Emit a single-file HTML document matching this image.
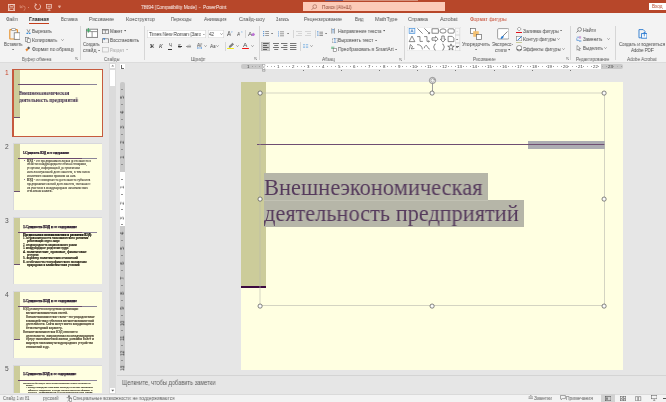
<!DOCTYPE html>
<html><head><meta charset="utf-8"><style>
html,body{margin:0;padding:0;}
body{width:666px;height:402px;overflow:hidden;position:relative;background:#e6e6e6;font-family:"Liberation Sans",sans-serif;}
.a{position:absolute;}
.t{white-space:nowrap;transform-origin:0 50%;will-change:transform;}
</style></head><body>
<div class="a" style="left:0px;top:0px;width:666px;height:12.6px;background:#b7472a;"></div>
<div class="a" style="left:325px;top:0px;width:18px;height:1.2px;background:#6a5a80;"></div>
<div class="a" style="left:343px;top:0px;width:75px;height:1.1px;background:#d3917c;"></div>
<svg class="a" style="left:7.8px;top:3.8px;" width="7.2" height="7.2" viewBox="0 0 7.2 7.2"><rect x="0.5" y="0.5" width="6.2" height="6.2" fill="none" stroke="#f6d8cf" stroke-width="0.8"/><rect x="2" y="0.6" width="3.2" height="2" fill="none" stroke="#f6d8cf" stroke-width="0.6"/><rect x="1.8" y="4" width="3.6" height="2.6" fill="none" stroke="#f6d8cf" stroke-width="0.6"/></svg>
<svg class="a" style="left:18.8px;top:3.6px;" width="7.5" height="7.5" viewBox="0 0 7.5 7.5"><path d="M1.2 1.2 L1.2 3.6 L3.6 3.6 M1.4 3.4 Q3.6 0.8 5.8 2.6 Q7 4.2 5 6.8" fill="none" stroke="#d98a72" stroke-width="0.8"/></svg>
<div class="a" style="left:28.4px;top:6.6px;width:1.0px;height:0.6px;background:#d98a72;"></div>
<svg class="a" style="left:34.0px;top:3.4px;" width="7.4" height="7.4" viewBox="0 0 7.4 7.4"><path d="M5.6 1.4 Q6.8 2.6 6.6 4.2 Q6.2 6.6 3.6 6.6 Q1 6.4 0.8 3.8 Q0.9 2.2 2.2 1.2 M0.8 0.8 L2.4 1.4 L1.6 2.8" fill="none" stroke="#f6d8cf" stroke-width="0.8"/></svg>
<svg class="a" style="left:45.7px;top:3.6px;" width="6.2" height="7.2" viewBox="0 0 6.2 7.2"><rect x="0.6" y="0.6" width="5" height="3.6" fill="none" stroke="#f6d8cf" stroke-width="0.7"/><path d="M3.1 4.2 V6.4 M1.6 6.6 H4.6 M2.2 1.6 V3.2 M3.1 2.2 V3.2 M4 1.4 V3.2" stroke="#f6d8cf" stroke-width="0.6"/></svg>
<svg class="a" style="left:58.2px;top:5.0px;" width="3" height="3.2" viewBox="0 0 3 3.2"><path d="M0.3 0.4 H2.7 M0.3 1.6 L1.5 2.8 L2.7 1.6 Z" fill="#f6d8cf" stroke="#f6d8cf" stroke-width="0.4"/></svg>
<div class="a" style="left:302.7px;top:1.8px;width:142.7px;height:9.3px;background:#fccbb8;"></div>
<span class="a t" style="left:322.3px;top:6.00px;font-size:4.8px;line-height:4.8px;color:#8a4636;font-weight:normal;font-family:'Liberation Sans', sans-serif;transform:scaleX(0.9698);">Поиск (Alt+Ш)</span>
<svg class="a" style="left:310.5px;top:3.6px;" width="6.2" height="6.4" viewBox="0 0 6.2 6.4"><circle cx="3.8" cy="2.6" r="1.9" fill="none" stroke="#9a5a48" stroke-width="0.6"/><path d="M2.4 4 L0.6 5.8" stroke="#9a5a48" stroke-width="0.7"/></svg>
<span class="a t" style="left:140.5px;top:5.00px;font-size:5.0px;line-height:5.0px;color:#ffffff;font-weight:normal;font-family:'Liberation Sans', sans-serif;transform:scaleX(0.9155);">78694 [Compatibility Mode]&nbsp; -&nbsp; PowerPoint</span>
<div class="a" style="left:648.8px;top:3px;width:17.2px;height:6.9px;background:#ffffff;"></div>
<span class="a t" style="left:651.5px;top:5.00px;font-size:4.6px;line-height:4.6px;color:#b7472a;font-weight:normal;font-family:'Liberation Sans', sans-serif;transform:scaleX(1.0090);">Вход</span>
<div class="a" style="left:0px;top:12.6px;width:666px;height:49.6px;background:#f3f3f3;"></div>
<div class="a" style="left:0px;top:62px;width:666px;height:0.6px;background:#dcdcdc;"></div>
<span class="a t" style="left:6px;top:17.00px;font-size:5.6px;line-height:5.6px;color:#505050;font-weight:normal;font-family:'Liberation Sans', sans-serif;transform:scaleX(0.8354);">Файл</span>
<span class="a t" style="left:28.7px;top:17.00px;font-size:5.6px;line-height:5.6px;color:#262626;font-weight:bold;font-family:'Liberation Sans', sans-serif;transform:scaleX(0.8791);">Главная</span>
<span class="a t" style="left:60.5px;top:17.00px;font-size:5.6px;line-height:5.6px;color:#505050;font-weight:normal;font-family:'Liberation Sans', sans-serif;transform:scaleX(0.7934);">Вставка</span>
<span class="a t" style="left:89px;top:17.00px;font-size:5.6px;line-height:5.6px;color:#505050;font-weight:normal;font-family:'Liberation Sans', sans-serif;transform:scaleX(0.8874);">Рисование</span>
<span class="a t" style="left:126px;top:17.00px;font-size:5.6px;line-height:5.6px;color:#505050;font-weight:normal;font-family:'Liberation Sans', sans-serif;transform:scaleX(0.9089);">Конструктор</span>
<span class="a t" style="left:170.5px;top:17.00px;font-size:5.6px;line-height:5.6px;color:#505050;font-weight:normal;font-family:'Liberation Sans', sans-serif;transform:scaleX(0.7810);">Переходы</span>
<span class="a t" style="left:204px;top:17.00px;font-size:5.6px;line-height:5.6px;color:#505050;font-weight:normal;font-family:'Liberation Sans', sans-serif;transform:scaleX(0.8566);">Анимация</span>
<span class="a t" style="left:239px;top:17.00px;font-size:5.6px;line-height:5.6px;color:#505050;font-weight:normal;font-family:'Liberation Sans', sans-serif;transform:scaleX(0.8862);">Слайд-шоу</span>
<span class="a t" style="left:276px;top:17.00px;font-size:5.6px;line-height:5.6px;color:#505050;font-weight:normal;font-family:'Liberation Sans', sans-serif;transform:scaleX(0.7081);">Запись</span>
<span class="a t" style="left:304px;top:17.00px;font-size:5.6px;line-height:5.6px;color:#505050;font-weight:normal;font-family:'Liberation Sans', sans-serif;transform:scaleX(0.8796);">Рецензирование</span>
<span class="a t" style="left:354.5px;top:17.00px;font-size:5.6px;line-height:5.6px;color:#505050;font-weight:normal;font-family:'Liberation Sans', sans-serif;transform:scaleX(0.8395);">Вид</span>
<span class="a t" style="left:374.5px;top:17.00px;font-size:5.6px;line-height:5.6px;color:#505050;font-weight:normal;font-family:'Liberation Sans', sans-serif;transform:scaleX(0.9160);">MathType</span>
<span class="a t" style="left:408px;top:17.00px;font-size:5.6px;line-height:5.6px;color:#505050;font-weight:normal;font-family:'Liberation Sans', sans-serif;transform:scaleX(0.9110);">Справка</span>
<span class="a t" style="left:439.5px;top:17.00px;font-size:5.6px;line-height:5.6px;color:#505050;font-weight:normal;font-family:'Liberation Sans', sans-serif;transform:scaleX(0.9076);">Acrobat</span>
<span class="a t" style="left:469.5px;top:17.00px;font-size:5.6px;line-height:5.6px;color:#c4432a;font-weight:normal;font-family:'Liberation Sans', sans-serif;transform:scaleX(0.8889);">Формат фигуры</span>
<div class="a" style="left:28.7px;top:23px;width:20px;height:1.1px;background:#c43e1c;"></div>
<svg class="a" style="left:8.6px;top:28.2px;" width="11.5" height="11.8" viewBox="0 0 11.5 11.8"><rect x="0.8" y="1.6" width="7.6" height="9.4" rx="0.6" fill="none" stroke="#e8912a" stroke-width="1.1"/><rect x="2.6" y="0.5" width="4" height="2" rx="0.4" fill="#fff" stroke="#777" stroke-width="0.6"/><rect x="5.2" y="4.8" width="5.8" height="6.5" fill="#fff" stroke="#6a6a6a" stroke-width="0.7"/></svg>
<span class="a t" style="left:3.8px;top:42.00px;font-size:5.2px;line-height:5.2px;color:#474747;font-weight:normal;font-family:'Liberation Sans', sans-serif;transform:scaleX(0.8364);">Вставить</span>
<svg class="a" style="left:11.9px;top:48.8px;" width="2.2" height="1.4" viewBox="0 0 2.2 1.4"><path d="M0 0 L2.2 0 L1.1 1.4 Z" fill="#666"/></svg>
<svg class="a" style="left:25.8px;top:28.6px;" width="5" height="5.4" viewBox="0 0 5 5.4"><path d="M1 0.3 L2.5 3.3 M4 0.3 L2.5 3.3" stroke="#555" stroke-width="0.6" fill="none"/><circle cx="1.3" cy="4.3" r="0.9" fill="#3c8fd8"/><circle cx="3.7" cy="4.3" r="0.9" fill="#3c8fd8"/></svg>
<span class="a t" style="left:31.8px;top:29.00px;font-size:5.2px;line-height:5.2px;color:#474747;font-weight:normal;font-family:'Liberation Sans', sans-serif;transform:scaleX(0.8580);">Вырезать</span>
<svg class="a" style="left:25.4px;top:37.4px;" width="5.8" height="6" viewBox="0 0 5.8 6"><rect x="0.4" y="0.6" width="3" height="3.8" fill="none" stroke="#666" stroke-width="0.55"/><rect x="2.2" y="1.8" width="3" height="3.8" fill="#fff" stroke="#555" stroke-width="0.55"/></svg>
<span class="a t" style="left:31.8px;top:38.00px;font-size:5.2px;line-height:5.2px;color:#474747;font-weight:normal;font-family:'Liberation Sans', sans-serif;transform:scaleX(0.9020);">Копировать</span>
<svg class="a" style="left:60.9px;top:39.0px;" width="3.0" height="2.0" viewBox="0 0 3.0 2.0"><path d="M0.4 0.4 L1.5 1.6 L2.6 0.4" fill="none" stroke="#666" stroke-width="0.6"/></svg>
<svg class="a" style="left:25.4px;top:46.2px;" width="5.6" height="5.8" viewBox="0 0 5.6 5.8"><path d="M3.6 0.4 L5.2 2 L3.4 3.4 L2 2 Z" fill="#555"/><path d="M0.4 3.6 L2 2.2 L3.4 3.6 L1.8 5.4 Z" fill="#e8822a"/></svg>
<span class="a t" style="left:31.8px;top:47.00px;font-size:5.2px;line-height:5.2px;color:#474747;font-weight:normal;font-family:'Liberation Sans', sans-serif;transform:scaleX(0.9029);">Формат по образцу</span>
<span class="a t" style="left:21.6px;top:58.00px;font-size:4.9px;line-height:4.9px;color:#5a5a5a;font-weight:normal;font-family:'Liberation Sans', sans-serif;transform:scaleX(0.8846);">Буфер обмена</span>
<svg class="a" style="left:74.7px;top:57.3px;" width="3" height="3" viewBox="0 0 3 3"><path d="M0.3 0.3 H2.6 M0.3 0.3 V2.6 M1.1 1.1 L2.7 2.7 M2.7 1.6 V2.7 H1.6" fill="none" stroke="#777" stroke-width="0.5"/></svg>
<div class="a" style="left:79.7px;top:26px;width:0.6px;height:34px;background:#d6d6d6;"></div>
<svg class="a" style="left:86px;top:28.4px;" width="12.2" height="10" viewBox="0 0 12.2 10"><rect x="0.6" y="1.2" width="11" height="8.2" fill="#fff" stroke="#7a7a7a" stroke-width="0.9"/><path d="M1.2 3.6 H11 M6.1 3.6 V9" stroke="#7a7a7a" stroke-width="0.8"/><path d="M2.4 0 V4.6 M0.1 2.3 H4.7" stroke="#3aa860" stroke-width="0.9"/></svg>
<span class="a t" style="left:83.4px;top:42.00px;font-size:5.2px;line-height:5.2px;color:#474747;font-weight:normal;font-family:'Liberation Sans', sans-serif;transform:scaleX(0.8418);">Создать</span>
<span class="a t" style="left:83.4px;top:48.00px;font-size:5.2px;line-height:5.2px;color:#474747;font-weight:normal;font-family:'Liberation Sans', sans-serif;transform:scaleX(0.9074);">слайд</span>
<svg class="a" style="left:97.5px;top:49.5px;" width="2.2" height="1.4" viewBox="0 0 2.2 1.4"><path d="M0 0 L2.2 0 L1.1 1.4 Z" fill="#666"/></svg>
<svg class="a" style="left:102.2px;top:28.6px;" width="7" height="5.4" viewBox="0 0 7 5.4"><rect x="0.4" y="0.4" width="6" height="4.4" fill="none" stroke="#6a6a6a" stroke-width="0.7"/><path d="M3.4 1.2 V4.2 M1.2 1.2 H5.6" stroke="#6a6a6a" stroke-width="0.6"/></svg>
<span class="a t" style="left:110px;top:29.00px;font-size:5.2px;line-height:5.2px;color:#474747;font-weight:normal;font-family:'Liberation Sans', sans-serif;transform:scaleX(0.8511);">Макет</span>
<svg class="a" style="left:123.9px;top:30.3px;" width="2.2" height="1.4" viewBox="0 0 2.2 1.4"><path d="M0 0 L2.2 0 L1.1 1.4 Z" fill="#666"/></svg>
<svg class="a" style="left:102.2px;top:37.8px;" width="7" height="5.6" viewBox="0 0 7 5.6"><rect x="0.4" y="0.8" width="6" height="4.4" fill="none" stroke="#6a6a6a" stroke-width="0.7"/><path d="M1 0.2 L2.2 2.2 L3.4 0.2" fill="#2a7ad0"/></svg>
<span class="a t" style="left:110px;top:38.00px;font-size:5.2px;line-height:5.2px;color:#474747;font-weight:normal;font-family:'Liberation Sans', sans-serif;transform:scaleX(0.8730);">Восстановить</span>
<svg class="a" style="left:102.2px;top:47.2px;" width="7" height="5.4" viewBox="0 0 7 5.4"><rect x="0.4" y="0.4" width="6" height="4.6" fill="none" stroke="#bdbdbd" stroke-width="0.7"/></svg>
<span class="a t" style="left:110px;top:48.00px;font-size:5.2px;line-height:5.2px;color:#a8a8a8;font-weight:normal;font-family:'Liberation Sans', sans-serif;transform:scaleX(0.8160);">Раздел</span>
<svg class="a" style="left:125.9px;top:49.099999999999994px;" width="2.2" height="1.4" viewBox="0 0 2.2 1.4"><path d="M0 0 L2.2 0 L1.1 1.4 Z" fill="#b0b0b0"/></svg>
<span class="a t" style="left:104px;top:58.00px;font-size:4.9px;line-height:4.9px;color:#5a5a5a;font-weight:normal;font-family:'Liberation Sans', sans-serif;transform:scaleX(0.8563);">Слайды</span>
<div class="a" style="left:144.4px;top:26px;width:0.6px;height:34px;background:#d6d6d6;"></div>
<div class="a" style="left:147.4px;top:29.7px;width:58.8px;height:8.5px;background:#ffffff;box-shadow:inset 0 0 0 0.6px #d4d4d4"></div>
<span class="a t" style="left:149px;top:32.00px;font-size:5.2px;line-height:5.2px;color:#333;font-weight:normal;font-family:'Liberation Sans', sans-serif;transform:scaleX(0.9037);">Times New Roman (Заго</span>
<svg class="a" style="left:202.9px;top:33.650000000000006px;" width="1.8" height="1.1" viewBox="0 0 1.8 1.1"><path d="M0 0 L1.8 0 L0.9 1.1 Z" fill="#777"/></svg>
<div class="a" style="left:207.6px;top:29.7px;width:16.9px;height:8.5px;background:#ffffff;box-shadow:inset 0 0 0 0.6px #d4d4d4"></div>
<span class="a t" style="left:209.2px;top:32.00px;font-size:5.2px;line-height:5.2px;color:#333;font-weight:normal;font-family:'Liberation Sans', sans-serif;transform:scaleX(0.8303);">42</span>
<svg class="a" style="left:219.5px;top:33.0px;" width="3.0" height="2.0" viewBox="0 0 3.0 2.0"><path d="M0.4 0.4 L1.5 1.6 L2.6 0.4" fill="none" stroke="#666" stroke-width="0.6"/></svg>
<span class="a t" style="left:227.2px;top:31.00px;font-size:6.4px;line-height:6.4px;color:#444;font-weight:normal;font-family:'Liberation Sans', sans-serif;transform:scaleX(0.8908);">A</span>
<svg class="a" style="left:231.0px;top:30.6px;" width="2.2" height="2" viewBox="0 0 2.2 2"><path d="M0.2 1.4 L1.1 0.5 L2.0 1.4" fill="none" stroke="#3a8ad8" stroke-width="0.5"/></svg>
<span class="a t" style="left:236.8px;top:32.00px;font-size:5.6px;line-height:5.6px;color:#444;font-weight:normal;font-family:'Liberation Sans', sans-serif;transform:scaleX(0.8569);">A</span>
<svg class="a" style="left:240.6px;top:30.6px;" width="2.2" height="2" viewBox="0 0 2.2 2"><path d="M0.2 0.5 L1.1 1.4 L2.0 0.5" fill="none" stroke="#3a8ad8" stroke-width="0.5"/></svg>
<div class="a" style="left:245.4px;top:29.5px;width:0.6px;height:8.0px;background:#d6d6d6;"></div>
<span class="a t" style="left:248.2px;top:31.00px;font-size:6.2px;line-height:6.2px;color:#555;font-weight:normal;font-family:'Liberation Sans', sans-serif;transform:scaleX(1.0385);">A</span>
<svg class="a" style="left:250.8px;top:32.0px;" width="4.4" height="4.4" viewBox="0 0 4.4 4.4"><path d="M0.5 2.8 L2.3 1.0 L3.9 2.4 L2.2 4.2 Z" fill="#c070d8" stroke="#a050c0" stroke-width="0.4"/></svg>
<span class="a t" style="left:149.8px;top:43.00px;font-size:6.0px;line-height:6.0px;color:#2a2a2a;font-weight:bold;font-family:'Liberation Sans', sans-serif;transform:scaleX(0.6989);">Ж</span>
<span class="a t" style="left:159.4px;top:43.00px;font-size:6.0px;line-height:6.0px;color:#3a3a3a;font-weight:normal;font-family:'Liberation Sans', sans-serif;transform:scaleX(0.9022);font-style:italic">К</span>
<span class="a t" style="left:168.6px;top:42.00px;font-size:6.0px;line-height:6.0px;color:#3a3a3a;font-weight:normal;font-family:'Liberation Sans', sans-serif;transform:scaleX(0.8000);">Ч</span>
<div class="a" style="left:168.4px;top:48.5px;width:3.4px;height:0.5px;background:#3a3a3a;"></div>
<span class="a t" style="left:178.2px;top:43.00px;font-size:6.0px;line-height:6.0px;color:#3a3a3a;font-weight:normal;font-family:'Liberation Sans', sans-serif;transform:scaleX(0.7471);">S</span>
<div class="a" style="left:177.8px;top:45.7px;width:3.8px;height:0.45px;background:#3a3a3a;"></div>
<span class="a t" style="left:186.6px;top:45.00px;font-size:4.6px;line-height:4.6px;color:#9a9a9a;font-weight:normal;font-family:'Liberation Sans', sans-serif;transform:scaleX(0.8195);">ab</span>
<div class="a" style="left:186.4px;top:45.8px;width:4.6px;height:0.45px;background:#9a9a9a;"></div>
<span class="a t" style="left:197.4px;top:44.00px;font-size:4.6px;line-height:4.6px;color:#3a3a3a;font-weight:normal;font-family:'Liberation Sans', sans-serif;transform:scaleX(0.8625);">AV</span>
<svg class="a" style="left:197.4px;top:47.4px;" width="5.4" height="2" viewBox="0 0 5.4 2"><path d="M0.3 1 H5 M0.3 1 L1.1 0.3 M0.3 1 L1.1 1.7 M5 1 L4.2 0.3 M5 1 L4.2 1.7" fill="none" stroke="#2a7ad0" stroke-width="0.5"/></svg>
<svg class="a" style="left:203.7px;top:45.0px;" width="3.0" height="2.0" viewBox="0 0 3.0 2.0"><path d="M0.4 0.4 L1.5 1.6 L2.6 0.4" fill="none" stroke="#666" stroke-width="0.6"/></svg>
<span class="a t" style="left:209.6px;top:44.00px;font-size:5.2px;line-height:5.2px;color:#444;font-weight:normal;font-family:'Liberation Sans', sans-serif;transform:scaleX(0.8806);">Aa</span>
<svg class="a" style="left:215.9px;top:45.0px;" width="3.0" height="2.0" viewBox="0 0 3.0 2.0"><path d="M0.4 0.4 L1.5 1.6 L2.6 0.4" fill="none" stroke="#666" stroke-width="0.6"/></svg>
<div class="a" style="left:224.6px;top:42.0px;width:0.6px;height:8.5px;background:#d6d6d6;"></div>
<svg class="a" style="left:227.6px;top:41.6px;" width="6.4" height="6" viewBox="0 0 6.4 6"><path d="M1.4 4.2 L4.4 1.2 L5.6 2.2 L2.6 5.2 Z" fill="#888" stroke="#444" stroke-width="0.5"/><path d="M1.4 4.2 L0.8 5.6 L2.6 5.2" fill="#444"/></svg>
<div class="a" style="left:227.2px;top:48.1px;width:6.6px;height:1.2px;background:#f2ea10;border-radius:0.5px"></div>
<svg class="a" style="left:235.5px;top:45.0px;" width="3.0" height="2.0" viewBox="0 0 3.0 2.0"><path d="M0.4 0.4 L1.5 1.6 L2.6 0.4" fill="none" stroke="#666" stroke-width="0.6"/></svg>
<span class="a t" style="left:243.0px;top:43.00px;font-size:5.2px;line-height:5.2px;color:#505050;font-weight:normal;font-family:'Liberation Sans', sans-serif;transform:scaleX(1.2685);">A</span>
<div class="a" style="left:242.2px;top:48.1px;width:6.6px;height:1.2px;background:#f01010;border-radius:0.5px"></div>
<svg class="a" style="left:250.5px;top:45.0px;" width="3.0" height="2.0" viewBox="0 0 3.0 2.0"><path d="M0.4 0.4 L1.5 1.6 L2.6 0.4" fill="none" stroke="#666" stroke-width="0.6"/></svg>
<span class="a t" style="left:191px;top:58.00px;font-size:4.9px;line-height:4.9px;color:#5a5a5a;font-weight:normal;font-family:'Liberation Sans', sans-serif;transform:scaleX(0.9010);">Шрифт</span>
<svg class="a" style="left:253.9px;top:57.3px;" width="3" height="3" viewBox="0 0 3 3"><path d="M0.3 0.3 H2.6 M0.3 0.3 V2.6 M1.1 1.1 L2.7 2.7 M2.7 1.6 V2.7 H1.6" fill="none" stroke="#777" stroke-width="0.5"/></svg>
<div class="a" style="left:258.7px;top:26px;width:0.6px;height:34px;background:#d6d6d6;"></div>
<svg class="a" style="left:262.6px;top:30.6px;" width="6.6" height="6.5" viewBox="0 0 6.6 6.5"><circle cx="0.7" cy="0.6" r="0.55" fill="#2a7ad0"/><rect x="2.2" y="0.25" width="4.3999999999999995" height="0.55" fill="#555"/><circle cx="0.7" cy="2.6" r="0.55" fill="#2a7ad0"/><rect x="2.2" y="2.25" width="4.3999999999999995" height="0.55" fill="#555"/><circle cx="0.7" cy="4.6" r="0.55" fill="#2a7ad0"/><rect x="2.2" y="4.25" width="4.3999999999999995" height="0.55" fill="#555"/></svg>
<svg class="a" style="left:271.2px;top:33.099999999999994px;" width="2.2" height="1.4" viewBox="0 0 2.2 1.4"><path d="M0 0 L2.2 0 L1.1 1.4 Z" fill="#666"/></svg>
<svg class="a" style="left:277.6px;top:30.6px;" width="6.6" height="6" viewBox="0 0 6.6 6"><rect x="0.3" y="0.3" width="0.6" height="1.2" fill="#2a7ad0"/><rect x="0.3" y="2.3" width="0.6" height="1.2" fill="#2a7ad0"/><rect x="0.3" y="4.3" width="0.6" height="1.2" fill="#2a7ad0"/><rect x="2" y="0.6" width="4.4" height="0.55" fill="#555"/><rect x="2" y="2.6" width="4.4" height="0.55" fill="#555"/><rect x="2" y="4.6" width="4.4" height="0.55" fill="#555"/></svg>
<svg class="a" style="left:286.5px;top:33.099999999999994px;" width="2.2" height="1.4" viewBox="0 0 2.2 1.4"><path d="M0 0 L2.2 0 L1.1 1.4 Z" fill="#666"/></svg>
<div class="a" style="left:292.6px;top:29.5px;width:0.6px;height:8.0px;background:#d6d6d6;"></div>
<svg class="a" style="left:296px;top:30.8px;" width="6" height="6.5" viewBox="0 0 6 6.5"><rect x="0" y="0.25" width="6" height="0.55" fill="#bdbdbd"/><rect x="2" y="2.25" width="4" height="0.55" fill="#bdbdbd"/><rect x="0" y="4.25" width="6" height="0.55" fill="#bdbdbd"/></svg>
<svg class="a" style="left:305px;top:30.8px;" width="6" height="6.5" viewBox="0 0 6 6.5"><rect x="0" y="0.25" width="6" height="0.55" fill="#bdbdbd"/><rect x="2" y="2.25" width="4" height="0.55" fill="#bdbdbd"/><rect x="0" y="4.25" width="6" height="0.55" fill="#bdbdbd"/></svg>
<div class="a" style="left:314.6px;top:29.5px;width:0.6px;height:8.0px;background:#d6d6d6;"></div>
<svg class="a" style="left:316.6px;top:30.8px;" width="6.6" height="5.6" viewBox="0 0 6.6 5.6"><path d="M0.8 0.3 V5.2 M0.2 1 L0.8 0.3 L1.4 1 M0.2 4.5 L0.8 5.2 L1.4 4.5" fill="none" stroke="#2a7ad0" stroke-width="0.45"/><rect x="2.4" y="0.8" width="4" height="0.6" fill="#555"/><rect x="2.4" y="2.6" width="4" height="0.6" fill="#555"/><rect x="2.4" y="4.4" width="4" height="0.6" fill="#555"/></svg>
<svg class="a" style="left:324.7px;top:33.099999999999994px;" width="2.2" height="1.4" viewBox="0 0 2.2 1.4"><path d="M0 0 L2.2 0 L1.1 1.4 Z" fill="#666"/></svg>
<div class="a" style="left:261.4px;top:41.7px;width:8.6px;height:8.9px;background:#d0d0d0;box-shadow:inset 0 0 0 0.5px #b4b4b4"></div>
<svg class="a" style="left:262.8px;top:43px;" width="6.6" height="7" viewBox="0 0 6.6 7"><rect x="0" y="0" width="5.8" height="0.8" fill="#444"/><rect x="0" y="2" width="4.0" height="0.8" fill="#444"/><rect x="0" y="4" width="5.8" height="0.8" fill="#444"/><rect x="0" y="6" width="4.0" height="0.8" fill="#444"/></svg>
<svg class="a" style="left:272.8px;top:43px;" width="6.6" height="7" viewBox="0 0 6.6 7"><rect x="0" y="0" width="6.4" height="0.8" fill="#555"/><rect x="1.2" y="2" width="4.0" height="0.8" fill="#555"/><rect x="0" y="4" width="6.4" height="0.8" fill="#555"/><rect x="1.2" y="6" width="4.0" height="0.8" fill="#555"/></svg>
<svg class="a" style="left:281.0px;top:43px;" width="6.6" height="7" viewBox="0 0 6.6 7"><rect x="0" y="0" width="6.4" height="0.8" fill="#555"/><rect x="2.4" y="2" width="4.0" height="0.8" fill="#555"/><rect x="0" y="4" width="6.4" height="0.8" fill="#555"/><rect x="2.4" y="6" width="4.0" height="0.8" fill="#555"/></svg>
<svg class="a" style="left:290.2px;top:43px;" width="6.6" height="7" viewBox="0 0 6.6 7"><rect x="0" y="0" width="6.4" height="0.8" fill="#555"/><rect x="0" y="2" width="6.4" height="0.8" fill="#555"/><rect x="0" y="4" width="6.4" height="0.8" fill="#555"/><rect x="0" y="6" width="6.4" height="0.8" fill="#555"/></svg>
<div class="a" style="left:299.6px;top:42.0px;width:0.6px;height:8.5px;background:#d6d6d6;"></div>
<svg class="a" style="left:303.4px;top:44.2px;" width="5.4" height="4.2" viewBox="0 0 5.4 4.2"><rect x="0" y="0.3" width="2.2" height="0.6" fill="#6aa8e0"/><rect x="3" y="0.3" width="2.2" height="0.6" fill="#6aa8e0"/><rect x="0" y="1.8" width="2.2" height="0.6" fill="#6aa8e0"/><rect x="3" y="1.8" width="2.2" height="0.6" fill="#6aa8e0"/><rect x="0" y="3.3" width="2.2" height="0.6" fill="#6aa8e0"/><rect x="3" y="3.3" width="2.2" height="0.6" fill="#6aa8e0"/></svg>
<svg class="a" style="left:310.1px;top:45.0px;" width="3.0" height="2.0" viewBox="0 0 3.0 2.0"><path d="M0.4 0.4 L1.5 1.6 L2.6 0.4" fill="none" stroke="#666" stroke-width="0.6"/></svg>
<svg class="a" style="left:331.4px;top:27.8px;" width="4.4" height="6" viewBox="0 0 4.4 6"><path d="M0.7 0.3 V5.6 M3.5 0.3 V5.6" stroke="#555" stroke-width="0.5"/><path d="M2.1 5.4 V1 M1.4 1.8 L2.1 1 L2.8 1.8" fill="none" stroke="#2a7ad0" stroke-width="0.5"/></svg>
<span class="a t" style="left:338px;top:29.00px;font-size:5.2px;line-height:5.2px;color:#474747;font-weight:normal;font-family:'Liberation Sans', sans-serif;transform:scaleX(0.8823);">Направление текста</span>
<svg class="a" style="left:382.9px;top:30.3px;" width="2.2" height="1.4" viewBox="0 0 2.2 1.4"><path d="M0 0 L2.2 0 L1.1 1.4 Z" fill="#666"/></svg>
<svg class="a" style="left:331.6px;top:37.6px;" width="6" height="5.6" viewBox="0 0 6 5.6"><rect x="0.4" y="0.4" width="5" height="4.6" fill="none" stroke="#555" stroke-width="0.5" stroke-dasharray="1 0.6"/><path d="M2.9 0.2 V5.2 M2.2 1 L2.9 0.3 L3.6 1 M2.2 4.4 L2.9 5.1 L3.6 4.4" fill="none" stroke="#2a7ad0" stroke-width="0.5"/></svg>
<span class="a t" style="left:338px;top:38.00px;font-size:5.2px;line-height:5.2px;color:#474747;font-weight:normal;font-family:'Liberation Sans', sans-serif;transform:scaleX(0.8708);">Выровнять текст</span>
<svg class="a" style="left:374.9px;top:39.699999999999996px;" width="2.2" height="1.4" viewBox="0 0 2.2 1.4"><path d="M0 0 L2.2 0 L1.1 1.4 Z" fill="#666"/></svg>
<svg class="a" style="left:331.0px;top:46.4px;" width="6.2" height="6" viewBox="0 0 6.2 6"><rect x="2.2" y="2.4" width="3.4" height="3" fill="#fff" stroke="#555" stroke-width="0.5"/><path d="M0.2 1.2 H3.4 M0.2 2.4 H2" stroke="#3aa860" stroke-width="0.7"/></svg>
<span class="a t" style="left:338px;top:47.00px;font-size:5.2px;line-height:5.2px;color:#474747;font-weight:normal;font-family:'Liberation Sans', sans-serif;transform:scaleX(0.8820);">Преобразовать в SmartArt</span>
<svg class="a" style="left:394.9px;top:48.9px;" width="2.2" height="1.4" viewBox="0 0 2.2 1.4"><path d="M0 0 L2.2 0 L1.1 1.4 Z" fill="#666"/></svg>
<span class="a t" style="left:321.5px;top:58.00px;font-size:4.9px;line-height:4.9px;color:#5a5a5a;font-weight:normal;font-family:'Liberation Sans', sans-serif;transform:scaleX(0.8956);">Абзац</span>
<svg class="a" style="left:398.8px;top:57.7px;" width="3" height="3" viewBox="0 0 3 3"><path d="M0.3 0.3 H2.6 M0.3 0.3 V2.6 M1.1 1.1 L2.7 2.7 M2.7 1.6 V2.7 H1.6" fill="none" stroke="#777" stroke-width="0.5"/></svg>
<div class="a" style="left:403.6px;top:26px;width:0.6px;height:34px;background:#d6d6d6;"></div>
<div class="a" style="left:407.4px;top:27.4px;width:53.2px;height:23.2px;background:#ffffff;box-shadow:inset 0 0 0 0.5px #dedede"></div>
<svg class="a" style="left:408.8px;top:28.4px;overflow:visible" width="6.6" height="6.6" viewBox="0 0 6.6 6.6"><g transform="translate(-0.6 -0.6) scale(1.2)"><rect x="0.6" y="0.9" width="4.8" height="4.2" fill="#eef4fb" stroke="#3a8ad8" stroke-width="0.55"/><path d="M2 4.2 L3 1.8 L4 4.2 M2.4 3.4 H3.6" fill="none" stroke="#2a6ab0" stroke-width="0.45"/></g></svg>
<svg class="a" style="left:416.5px;top:28.4px;overflow:visible" width="6.6" height="6.6" viewBox="0 0 6.6 6.6"><g transform="translate(-0.6 -0.6) scale(1.2)"><path d="M0.8 0.8 L5.2 5.2" stroke="#3a3a3a" stroke-width="0.5"/></g></svg>
<svg class="a" style="left:424.4px;top:28.4px;overflow:visible" width="6.6" height="6.6" viewBox="0 0 6.6 6.6"><g transform="translate(-0.6 -0.6) scale(1.2)"><path d="M0.8 0.8 L5 5 M5.2 3.8 V5.2 H3.8" fill="none" stroke="#3a3a3a" stroke-width="0.5"/></g></svg>
<svg class="a" style="left:431.8px;top:28.4px;overflow:visible" width="6.6" height="6.6" viewBox="0 0 6.6 6.6"><g transform="translate(-0.6 -0.6) scale(1.2)"><rect x="0.5" y="1.2" width="5.2" height="3.6" fill="none" stroke="#3a3a3a" stroke-width="0.5"/></g></svg>
<svg class="a" style="left:439.6px;top:28.4px;overflow:visible" width="6.6" height="6.6" viewBox="0 0 6.6 6.6"><g transform="translate(-0.6 -0.6) scale(1.2)"><ellipse cx="3" cy="3" rx="2.6" ry="1.8" fill="none" stroke="#3a3a3a" stroke-width="0.5"/></g></svg>
<svg class="a" style="left:447.8px;top:28.4px;overflow:visible" width="6.6" height="6.6" viewBox="0 0 6.6 6.6"><g transform="translate(-0.6 -0.6) scale(1.2)"><rect x="0.5" y="1.2" width="5.2" height="3.6" rx="1" fill="none" stroke="#3a3a3a" stroke-width="0.5"/></g></svg>
<svg class="a" style="left:408.8px;top:36.0px;overflow:visible" width="6.6" height="6.6" viewBox="0 0 6.6 6.6"><g transform="translate(-0.6 -0.6) scale(1.2)"><path d="M3 0.6 L5.4 5.2 H0.6 Z" fill="none" stroke="#3a3a3a" stroke-width="0.5"/></g></svg>
<svg class="a" style="left:416.5px;top:36.0px;overflow:visible" width="6.6" height="6.6" viewBox="0 0 6.6 6.6"><g transform="translate(-0.6 -0.6) scale(1.2)"><path d="M0.6 1 H3 V5 H5.4" fill="none" stroke="#3a3a3a" stroke-width="0.5"/></g></svg>
<svg class="a" style="left:424.4px;top:36.0px;overflow:visible" width="6.6" height="6.6" viewBox="0 0 6.6 6.6"><g transform="translate(-0.6 -0.6) scale(1.2)"><path d="M0.6 1 H3 V5 H5 M4.2 4.3 L5 5 L4.2 5.7" fill="none" stroke="#3a3a3a" stroke-width="0.5"/></g></svg>
<svg class="a" style="left:431.8px;top:36.0px;overflow:visible" width="6.6" height="6.6" viewBox="0 0 6.6 6.6"><g transform="translate(-0.6 -0.6) scale(1.2)"><path d="M0.5 2 H3.4 V0.8 L5.6 3 L3.4 5.2 V4 H0.5 Z" fill="none" stroke="#3a3a3a" stroke-width="0.5"/></g></svg>
<svg class="a" style="left:439.6px;top:36.0px;overflow:visible" width="6.6" height="6.6" viewBox="0 0 6.6 6.6"><g transform="translate(-0.6 -0.6) scale(1.2)"><path d="M2 0.5 H4 V3.2 H5.2 L3 5.6 L0.8 3.2 H2 Z" fill="none" stroke="#3a3a3a" stroke-width="0.5"/></g></svg>
<svg class="a" style="left:447.8px;top:36.0px;overflow:visible" width="6.6" height="6.6" viewBox="0 0 6.6 6.6"><g transform="translate(-0.6 -0.6) scale(1.2)"><path d="M0.6 0.8 H4 L5.4 2.2 V5.2 H0.6 Z" fill="none" stroke="#3a3a3a" stroke-width="0.5"/></g></svg>
<svg class="a" style="left:408.8px;top:43.6px;overflow:visible" width="6.6" height="6.6" viewBox="0 0 6.6 6.6"><g transform="translate(-0.6 -0.6) scale(1.2)"><path d="M0.8 5 L1.6 1 L3.4 2.6 L2.4 4.6 L5 4.2" fill="none" stroke="#3a3a3a" stroke-width="0.5"/></g></svg>
<svg class="a" style="left:416.5px;top:43.6px;overflow:visible" width="6.6" height="6.6" viewBox="0 0 6.6 6.6"><g transform="translate(-0.6 -0.6) scale(1.2)"><path d="M0.6 1 Q4.6 1 5 5" fill="none" stroke="#3a3a3a" stroke-width="0.5"/></g></svg>
<svg class="a" style="left:424.4px;top:43.6px;overflow:visible" width="6.6" height="6.6" viewBox="0 0 6.6 6.6"><g transform="translate(-0.6 -0.6) scale(1.2)"><path d="M0.6 4 Q2 0.2 3.2 2.6 T5.4 4.8" fill="none" stroke="#3a3a3a" stroke-width="0.5"/></g></svg>
<svg class="a" style="left:431.8px;top:43.6px;overflow:visible" width="6.6" height="6.6" viewBox="0 0 6.6 6.6"><g transform="translate(-0.6 -0.6) scale(1.2)"><path d="M3.6 0.5 Q2.4 0.5 2.4 1.8 V2.4 L1.6 3 L2.4 3.6 V4.4 Q2.4 5.6 3.6 5.6" fill="none" stroke="#3a3a3a" stroke-width="0.5"/></g></svg>
<svg class="a" style="left:439.6px;top:43.6px;overflow:visible" width="6.6" height="6.6" viewBox="0 0 6.6 6.6"><g transform="translate(-0.6 -0.6) scale(1.2)"><path d="M2.4 0.5 Q3.6 0.5 3.6 1.8 V2.4 L4.4 3 L3.6 3.6 V4.4 Q3.6 5.6 2.4 5.6" fill="none" stroke="#3a3a3a" stroke-width="0.5"/></g></svg>
<svg class="a" style="left:447.8px;top:43.6px;overflow:visible" width="6.6" height="6.6" viewBox="0 0 6.6 6.6"><g transform="translate(-0.6 -0.6) scale(1.2)"><path d="M3 0.4 L3.7 2.3 L5.7 2.3 L4.1 3.5 L4.7 5.5 L3 4.3 L1.3 5.5 L1.9 3.5 L0.3 2.3 L2.3 2.3 Z" fill="none" stroke="#3a3a3a" stroke-width="0.5"/></g></svg>
<div class="a" style="left:454.8px;top:27.8px;width:5.4px;height:7.4px;background:#f8f8f8;box-shadow:inset 0 0 0 0.5px #d4d4d4"></div>
<div class="a" style="left:454.8px;top:35.4px;width:5.4px;height:7.4px;background:#f8f8f8;box-shadow:inset 0 0 0 0.5px #d4d4d4"></div>
<div class="a" style="left:454.8px;top:43.2px;width:5.4px;height:7.4px;background:#f8f8f8;box-shadow:inset 0 0 0 0.5px #d4d4d4"></div>
<svg class="a" style="left:456.3px;top:30.7px;" width="2.6" height="1.6" viewBox="0 0 2.6 1.6"><path d="M0.3 1.3 L1.3 0.3 L2.3 1.3" fill="none" stroke="#c0c0c0" stroke-width="0.5"/></svg>
<svg class="a" style="left:456.4px;top:38.5px;" width="2.2" height="1.4" viewBox="0 0 2.2 1.4"><path d="M0 0 L2.2 0 L1.1 1.4 Z" fill="#707070"/></svg>
<div class="a" style="left:456.4px;top:45.6px;width:2.2px;height:0.45px;background:#707070;"></div>
<svg class="a" style="left:456.4px;top:46.5px;" width="2.2" height="1.4" viewBox="0 0 2.2 1.4"><path d="M0 0 L2.2 0 L1.1 1.4 Z" fill="#707070"/></svg>
<svg class="a" style="left:470.2px;top:27.8px;" width="12" height="12" viewBox="0 0 12 12"><rect x="0.5" y="0.5" width="5" height="5" fill="#fff" stroke="#666" stroke-width="0.7"/><rect x="3.2" y="3.2" width="5.6" height="5.6" fill="#f4c070"/><rect x="6.5" y="6.5" width="5" height="5" fill="#fff" stroke="#666" stroke-width="0.7"/></svg>
<span class="a t" style="left:462.2px;top:42.00px;font-size:5.2px;line-height:5.2px;color:#474747;font-weight:normal;font-family:'Liberation Sans', sans-serif;transform:scaleX(0.9004);">Упорядочить</span>
<svg class="a" style="left:474.9px;top:48.8px;" width="2.2" height="1.4" viewBox="0 0 2.2 1.4"><path d="M0 0 L2.2 0 L1.1 1.4 Z" fill="#666"/></svg>
<svg class="a" style="left:496.6px;top:28.2px;" width="12.6" height="12" viewBox="0 0 12.6 12"><rect x="0.6" y="0.6" width="11.4" height="10.4" rx="1.2" fill="#fff" stroke="#8a8a8a" stroke-width="0.8"/><path d="M10.5 3.5 L6 8" stroke="#666" stroke-width="0.8"/><path d="M4 10.6 Q4.2 8.2 6.2 8.2 Q6.8 9.8 4 10.6 Z" fill="#2a7ad0" stroke="#2a7ad0" stroke-width="0.8"/></svg>
<span class="a t" style="left:491.8px;top:42.00px;font-size:5.2px;line-height:5.2px;color:#474747;font-weight:normal;font-family:'Liberation Sans', sans-serif;transform:scaleX(0.8693);">Экспресс-</span>
<span class="a t" style="left:494.8px;top:48.00px;font-size:5.2px;line-height:5.2px;color:#474747;font-weight:normal;font-family:'Liberation Sans', sans-serif;transform:scaleX(0.8843);">стили</span>
<svg class="a" style="left:508.29999999999995px;top:49.3px;" width="2.2" height="1.4" viewBox="0 0 2.2 1.4"><path d="M0 0 L2.2 0 L1.1 1.4 Z" fill="#666"/></svg>
<svg class="a" style="left:516px;top:26.4px;" width="6.4" height="5.6" viewBox="0 0 6.4 5.6"><path d="M1.2 3 L3.2 1 L5.2 3 L3.2 5 Z" fill="#fff" stroke="#555" stroke-width="0.5"/></svg>
<div class="a" style="left:515.8px;top:32.0px;width:6.6px;height:1.0px;background:#e0101a;"></div>
<span class="a t" style="left:523.2px;top:29.00px;font-size:5.2px;line-height:5.2px;color:#474747;font-weight:normal;font-family:'Liberation Sans', sans-serif;transform:scaleX(0.9085);">Заливка фигуры</span>
<svg class="a" style="left:559.9px;top:30.1px;" width="2.2" height="1.4" viewBox="0 0 2.2 1.4"><path d="M0 0 L2.2 0 L1.1 1.4 Z" fill="#666"/></svg>
<svg class="a" style="left:516px;top:36px;" width="6.4" height="5.4" viewBox="0 0 6.4 5.4"><rect x="0.5" y="0.5" width="5.4" height="4.4" fill="#fff" stroke="#666" stroke-width="0.5"/><path d="M1.6 4.2 L5.6 0.6" stroke="#2a7ad0" stroke-width="1"/></svg>
<div class="a" style="left:515.8px;top:41.8px;width:6.6px;height:0.9px;background:#c9c99a;"></div>
<span class="a t" style="left:523.2px;top:37.00px;font-size:5.2px;line-height:5.2px;color:#474747;font-weight:normal;font-family:'Liberation Sans', sans-serif;transform:scaleX(0.9096);">Контур фигуры</span>
<svg class="a" style="left:557.1px;top:38.4px;" width="3.0" height="2.0" viewBox="0 0 3.0 2.0"><path d="M0.4 0.4 L1.5 1.6 L2.6 0.4" fill="none" stroke="#666" stroke-width="0.6"/></svg>
<svg class="a" style="left:516px;top:45.4px;" width="6.4" height="6.4" viewBox="0 0 6.4 6.4"><circle cx="3.2" cy="3.2" r="2.7" fill="#fff" stroke="#555" stroke-width="0.6"/><path d="M0.8 3.6 Q3.2 5.8 5.6 3.6 V4.4 Q3.2 6.2 0.8 4.4 Z" fill="#555"/></svg>
<span class="a t" style="left:523.2px;top:47.00px;font-size:5.2px;line-height:5.2px;color:#474747;font-weight:normal;font-family:'Liberation Sans', sans-serif;transform:scaleX(0.8743);">Эффекты фигуры</span>
<svg class="a" style="left:561.5px;top:47.6px;" width="3.0" height="2.0" viewBox="0 0 3.0 2.0"><path d="M0.4 0.4 L1.5 1.6 L2.6 0.4" fill="none" stroke="#666" stroke-width="0.6"/></svg>
<span class="a t" style="left:472.6px;top:58.00px;font-size:4.9px;line-height:4.9px;color:#5a5a5a;font-weight:normal;font-family:'Liberation Sans', sans-serif;transform:scaleX(0.9010);">Рисование</span>
<svg class="a" style="left:566.1px;top:57.3px;" width="3" height="3" viewBox="0 0 3 3"><path d="M0.3 0.3 H2.6 M0.3 0.3 V2.6 M1.1 1.1 L2.7 2.7 M2.7 1.6 V2.7 H1.6" fill="none" stroke="#777" stroke-width="0.5"/></svg>
<div class="a" style="left:570px;top:26px;width:0.6px;height:34px;background:#d6d6d6;"></div>
<svg class="a" style="left:575.5px;top:27.2px;" width="6" height="6" viewBox="0 0 6 6"><circle cx="3.6" cy="2.4" r="1.9" fill="none" stroke="#555" stroke-width="0.6"/><path d="M2.2 3.8 L0.5 5.5" stroke="#555" stroke-width="0.7"/></svg>
<span class="a t" style="left:583px;top:28.00px;font-size:5.2px;line-height:5.2px;color:#474747;font-weight:normal;font-family:'Liberation Sans', sans-serif;transform:scaleX(0.8776);">Найти</span>
<svg class="a" style="left:575.5px;top:36.2px;" width="6" height="6.2" viewBox="0 0 6 6.2"><path d="M0.8 1.2 H3.2 M0.8 2.2 V4.4 H3" fill="none" stroke="#2a7ad0" stroke-width="0.6"/><path d="M3.4 0.2 V2.6 M4.6 0.2 V2.6" stroke="#b060c0" stroke-width="0.6"/><path d="M3.6 4 V6 M4.8 4 V6" stroke="#2a7ad0" stroke-width="0.5"/></svg>
<span class="a t" style="left:583px;top:37.00px;font-size:5.2px;line-height:5.2px;color:#474747;font-weight:normal;font-family:'Liberation Sans', sans-serif;transform:scaleX(0.8322);">Заменить</span>
<svg class="a" style="left:606.7px;top:38.1px;" width="3.0" height="2.0" viewBox="0 0 3.0 2.0"><path d="M0.4 0.4 L1.5 1.6 L2.6 0.4" fill="none" stroke="#666" stroke-width="0.6"/></svg>
<svg class="a" style="left:576px;top:44.8px;" width="5.4" height="6.4" viewBox="0 0 5.4 6.4"><path d="M1 0.5 L1 5.2 L2.2 4 L3.2 6 L4 5.6 L3 3.6 L4.6 3.6 Z" fill="#fff" stroke="#555" stroke-width="0.5"/></svg>
<span class="a t" style="left:583px;top:46.00px;font-size:5.2px;line-height:5.2px;color:#474747;font-weight:normal;font-family:'Liberation Sans', sans-serif;transform:scaleX(0.8355);">Выделить</span>
<svg class="a" style="left:604.3px;top:46.8px;" width="3.0" height="2.0" viewBox="0 0 3.0 2.0"><path d="M0.4 0.4 L1.5 1.6 L2.6 0.4" fill="none" stroke="#666" stroke-width="0.6"/></svg>
<span class="a t" style="left:575.8px;top:58.00px;font-size:4.9px;line-height:4.9px;color:#5a5a5a;font-weight:normal;font-family:'Liberation Sans', sans-serif;transform:scaleX(0.8963);">Редактирование</span>
<div class="a" style="left:614.7px;top:26px;width:0.6px;height:34px;background:#d6d6d6;"></div>
<svg class="a" style="left:637.7px;top:28.8px;" width="9.6" height="10" viewBox="0 0 9.6 10"><path d="M1 0.6 H5.2 L7 2.4 V6 M1 0.6 V8.8 H3" fill="none" stroke="#2a7ad0" stroke-width="0.9"/><rect x="3.6" y="4.6" width="5.4" height="4.6" fill="#fff" stroke="#2a7ad0" stroke-width="0.9"/><path d="M6.3 7.4 V3.4 M5.2 4.4 L6.3 3.3 L7.4 4.4" fill="none" stroke="#2a7ad0" stroke-width="0.8"/></svg>
<span class="a t" style="left:619px;top:42.00px;font-size:5.2px;line-height:5.2px;color:#474747;font-weight:normal;font-family:'Liberation Sans', sans-serif;transform:scaleX(0.8644);">Создать и поделиться</span>
<span class="a t" style="left:630.5px;top:48.00px;font-size:5.2px;line-height:5.2px;color:#474747;font-weight:normal;font-family:'Liberation Sans', sans-serif;transform:scaleX(0.8349);">Adobe PDF</span>
<span class="a t" style="left:627px;top:58.00px;font-size:4.9px;line-height:4.9px;color:#5a5a5a;font-weight:normal;font-family:'Liberation Sans', sans-serif;transform:scaleX(0.9192);">Adobe Acrobat</span>
<div class="a" style="left:108.8px;top:62.6px;width:7.2px;height:331.6px;background:#dbdbdb;"></div>
<div class="a" style="left:240.5px;top:81.7px;width:382.8px;height:288.2px;background:#ffffe1;"></div>
<div class="a" style="left:240.5px;top:81.7px;width:25.6px;height:204.3px;background:#cccc9a;"></div>
<div class="a" style="left:240.5px;top:285.8px;width:25.6px;height:2.2px;background:#3d0a40;"></div>
<div class="a" style="left:528px;top:141.2px;width:76.5px;height:7.6px;background:#acacb2;"></div>
<div class="a" style="left:257px;top:144.1px;width:347.5px;height:1.3px;background:#6e4e72;"></div>
<div class="a" style="left:263.5px;top:172.8px;width:224.4px;height:26.9px;background:#b6b6a8;"></div>
<div class="a" style="left:263.5px;top:199.7px;width:260.4px;height:27.1px;background:#b6b6a8;"></div>
<div class="a" style="left:263.5px;top:199.5px;width:224.4px;height:0.6px;background:#c2c2b4;"></div>
<span class="a t" style="left:264.3px;top:176.75px;font-size:22.5px;line-height:22.5px;color:#553a5c;font-weight:normal;font-family:'Liberation Serif', serif;transform:scaleX(0.9976);">Внешнеэкономическая</span>
<span class="a t" style="left:264.3px;top:203.35px;font-size:22.5px;line-height:22.5px;color:#553a5c;font-weight:normal;font-family:'Liberation Serif', serif;transform:scaleX(0.9923);">деятельность предприятий</span>
<svg class="a" style="left:259px;top:92.4px;" width="347" height="215" viewBox="0 0 347 215"><rect x="1" y="1" width="344.5" height="212.4" fill="none" stroke="#b8b8ae" stroke-width="0.6"/></svg>
<div class="a" style="left:431.75px;top:83px;width:0.5px;height:10.5px;background:#a0a0a0;"></div>
<svg class="a" style="left:256.9px;top:90.4px;" width="6.2" height="6.2" viewBox="0 0 6.2 6.2"><circle cx="3.1" cy="3.1" r="2.1" fill="#fafafa" stroke="#505050" stroke-width="0.7"/></svg>
<svg class="a" style="left:256.9px;top:196.4px;" width="6.2" height="6.2" viewBox="0 0 6.2 6.2"><circle cx="3.1" cy="3.1" r="2.1" fill="#fafafa" stroke="#505050" stroke-width="0.7"/></svg>
<svg class="a" style="left:256.9px;top:302.7px;" width="6.2" height="6.2" viewBox="0 0 6.2 6.2"><circle cx="3.1" cy="3.1" r="2.1" fill="#fafafa" stroke="#505050" stroke-width="0.7"/></svg>
<svg class="a" style="left:428.9px;top:90.4px;" width="6.2" height="6.2" viewBox="0 0 6.2 6.2"><circle cx="3.1" cy="3.1" r="2.1" fill="#fafafa" stroke="#505050" stroke-width="0.7"/></svg>
<svg class="a" style="left:428.9px;top:302.7px;" width="6.2" height="6.2" viewBox="0 0 6.2 6.2"><circle cx="3.1" cy="3.1" r="2.1" fill="#fafafa" stroke="#505050" stroke-width="0.7"/></svg>
<svg class="a" style="left:601.4px;top:90.4px;" width="6.2" height="6.2" viewBox="0 0 6.2 6.2"><circle cx="3.1" cy="3.1" r="2.1" fill="#fafafa" stroke="#505050" stroke-width="0.7"/></svg>
<svg class="a" style="left:601.4px;top:196.4px;" width="6.2" height="6.2" viewBox="0 0 6.2 6.2"><circle cx="3.1" cy="3.1" r="2.1" fill="#fafafa" stroke="#505050" stroke-width="0.7"/></svg>
<svg class="a" style="left:601.4px;top:302.7px;" width="6.2" height="6.2" viewBox="0 0 6.2 6.2"><circle cx="3.1" cy="3.1" r="2.1" fill="#fafafa" stroke="#505050" stroke-width="0.7"/></svg>
<svg class="a" style="left:427.5px;top:75.6px;" width="9" height="9" viewBox="0 0 9 9"><circle cx="4.5" cy="4.5" r="3.1" fill="#f2f2f2" stroke="#6a6a6a" stroke-width="0.7"/><path d="M6.0 3.2 A1.8 1.8 0 1 0 5.9 5.7" fill="none" stroke="#6a6a6a" stroke-width="0.5"/><path d="M5.6 2.9 L7.5 3.9 L5.9 4.6 Z" fill="#6a6a6a"/></svg>
<div class="a" style="left:240.8px;top:64.1px;width:22.5px;height:4.7px;background:#c9c9c9;border-radius:2px 0 0 2px"></div>
<div class="a" style="left:263.3px;top:64.1px;width:337.7px;height:4.7px;background:#ffffff;"></div>
<div class="a" style="left:601px;top:64.1px;width:22.4px;height:4.7px;background:#c9c9c9;border-radius:0 2px 2px 0"></div>
<span class="a t" style="top:65.00px;font-size:4.4px;line-height:4.4px;color:#3a3a3a;font-weight:normal;font-family:'Liberation Sans', sans-serif;transform:scaleX(1.0000);left:247.13px">1</span>
<div class="a" style="left:255.465px;top:65.6px;width:0.6px;height:1.6px;background:#b0b0b0;"></div>
<div class="a" style="left:251.64750000000004px;top:66.1px;width:0.7px;height:0.7px;background:#a0a0a0;"></div>
<div class="a" style="left:259.1825px;top:66.1px;width:0.7px;height:0.7px;background:#a0a0a0;"></div>
<div class="a" style="left:270.535px;top:65.6px;width:0.6px;height:1.6px;background:#b0b0b0;"></div>
<div class="a" style="left:266.7175px;top:66.1px;width:0.7px;height:0.7px;background:#a0a0a0;"></div>
<div class="a" style="left:274.2525px;top:66.1px;width:0.7px;height:0.7px;background:#a0a0a0;"></div>
<span class="a t" style="top:65.00px;font-size:4.4px;line-height:4.4px;color:#3a3a3a;font-weight:normal;font-family:'Liberation Sans', sans-serif;transform:scaleX(1.0000);left:277.27px">1</span>
<div class="a" style="left:285.605px;top:65.6px;width:0.6px;height:1.6px;background:#b0b0b0;"></div>
<div class="a" style="left:281.78749999999997px;top:66.1px;width:0.7px;height:0.7px;background:#a0a0a0;"></div>
<div class="a" style="left:289.3225px;top:66.1px;width:0.7px;height:0.7px;background:#a0a0a0;"></div>
<span class="a t" style="top:65.00px;font-size:4.4px;line-height:4.4px;color:#3a3a3a;font-weight:normal;font-family:'Liberation Sans', sans-serif;transform:scaleX(1.0000);left:292.34px">2</span>
<div class="a" style="left:300.675px;top:65.6px;width:0.6px;height:1.6px;background:#b0b0b0;"></div>
<div class="a" style="left:296.85749999999996px;top:66.1px;width:0.7px;height:0.7px;background:#a0a0a0;"></div>
<div class="a" style="left:304.3925px;top:66.1px;width:0.7px;height:0.7px;background:#a0a0a0;"></div>
<span class="a t" style="top:65.00px;font-size:4.4px;line-height:4.4px;color:#3a3a3a;font-weight:normal;font-family:'Liberation Sans', sans-serif;transform:scaleX(1.0000);left:307.41px">3</span>
<div class="a" style="left:315.745px;top:65.6px;width:0.6px;height:1.6px;background:#b0b0b0;"></div>
<div class="a" style="left:311.92749999999995px;top:66.1px;width:0.7px;height:0.7px;background:#a0a0a0;"></div>
<div class="a" style="left:319.4625px;top:66.1px;width:0.7px;height:0.7px;background:#a0a0a0;"></div>
<span class="a t" style="top:65.00px;font-size:4.4px;line-height:4.4px;color:#3a3a3a;font-weight:normal;font-family:'Liberation Sans', sans-serif;transform:scaleX(1.0000);left:322.48px">4</span>
<div class="a" style="left:330.81500000000005px;top:65.6px;width:0.6px;height:1.6px;background:#b0b0b0;"></div>
<div class="a" style="left:326.9975px;top:66.1px;width:0.7px;height:0.7px;background:#a0a0a0;"></div>
<div class="a" style="left:334.5325px;top:66.1px;width:0.7px;height:0.7px;background:#a0a0a0;"></div>
<span class="a t" style="top:65.00px;font-size:4.4px;line-height:4.4px;color:#3a3a3a;font-weight:normal;font-family:'Liberation Sans', sans-serif;transform:scaleX(1.0000);left:337.55px">5</span>
<div class="a" style="left:345.885px;top:65.6px;width:0.6px;height:1.6px;background:#b0b0b0;"></div>
<div class="a" style="left:342.06749999999994px;top:66.1px;width:0.7px;height:0.7px;background:#a0a0a0;"></div>
<div class="a" style="left:349.60249999999996px;top:66.1px;width:0.7px;height:0.7px;background:#a0a0a0;"></div>
<span class="a t" style="top:65.00px;font-size:4.4px;line-height:4.4px;color:#3a3a3a;font-weight:normal;font-family:'Liberation Sans', sans-serif;transform:scaleX(1.0000);left:352.62px">6</span>
<div class="a" style="left:360.95500000000004px;top:65.6px;width:0.6px;height:1.6px;background:#b0b0b0;"></div>
<div class="a" style="left:357.1375px;top:66.1px;width:0.7px;height:0.7px;background:#a0a0a0;"></div>
<div class="a" style="left:364.6725px;top:66.1px;width:0.7px;height:0.7px;background:#a0a0a0;"></div>
<span class="a t" style="top:65.00px;font-size:4.4px;line-height:4.4px;color:#3a3a3a;font-weight:normal;font-family:'Liberation Sans', sans-serif;transform:scaleX(1.0000);left:367.69px">7</span>
<div class="a" style="left:376.02500000000003px;top:65.6px;width:0.6px;height:1.6px;background:#b0b0b0;"></div>
<div class="a" style="left:372.2075px;top:66.1px;width:0.7px;height:0.7px;background:#a0a0a0;"></div>
<div class="a" style="left:379.7425px;top:66.1px;width:0.7px;height:0.7px;background:#a0a0a0;"></div>
<span class="a t" style="top:65.00px;font-size:4.4px;line-height:4.4px;color:#3a3a3a;font-weight:normal;font-family:'Liberation Sans', sans-serif;transform:scaleX(1.0000);left:382.76px">8</span>
<div class="a" style="left:391.095px;top:65.6px;width:0.6px;height:1.6px;background:#b0b0b0;"></div>
<div class="a" style="left:387.2775px;top:66.1px;width:0.7px;height:0.7px;background:#a0a0a0;"></div>
<div class="a" style="left:394.8125px;top:66.1px;width:0.7px;height:0.7px;background:#a0a0a0;"></div>
<span class="a t" style="top:65.00px;font-size:4.4px;line-height:4.4px;color:#3a3a3a;font-weight:normal;font-family:'Liberation Sans', sans-serif;transform:scaleX(1.0000);left:397.83px">9</span>
<div class="a" style="left:406.165px;top:65.6px;width:0.6px;height:1.6px;background:#b0b0b0;"></div>
<div class="a" style="left:402.34749999999997px;top:66.1px;width:0.7px;height:0.7px;background:#a0a0a0;"></div>
<div class="a" style="left:409.8825px;top:66.1px;width:0.7px;height:0.7px;background:#a0a0a0;"></div>
<span class="a t" style="top:65.00px;font-size:4.4px;line-height:4.4px;color:#3a3a3a;font-weight:normal;font-family:'Liberation Sans', sans-serif;transform:scaleX(1.0000);left:411.80px">10</span>
<div class="a" style="left:421.235px;top:65.6px;width:0.6px;height:1.6px;background:#b0b0b0;"></div>
<div class="a" style="left:417.41749999999996px;top:66.1px;width:0.7px;height:0.7px;background:#a0a0a0;"></div>
<div class="a" style="left:424.9525px;top:66.1px;width:0.7px;height:0.7px;background:#a0a0a0;"></div>
<span class="a t" style="top:65.00px;font-size:4.4px;line-height:4.4px;color:#3a3a3a;font-weight:normal;font-family:'Liberation Sans', sans-serif;transform:scaleX(1.0000);left:426.87px">11</span>
<div class="a" style="left:436.30500000000006px;top:65.6px;width:0.6px;height:1.6px;background:#b0b0b0;"></div>
<div class="a" style="left:432.4875px;top:66.1px;width:0.7px;height:0.7px;background:#a0a0a0;"></div>
<div class="a" style="left:440.02250000000004px;top:66.1px;width:0.7px;height:0.7px;background:#a0a0a0;"></div>
<span class="a t" style="top:65.00px;font-size:4.4px;line-height:4.4px;color:#3a3a3a;font-weight:normal;font-family:'Liberation Sans', sans-serif;transform:scaleX(1.0000);left:441.94px">12</span>
<div class="a" style="left:451.375px;top:65.6px;width:0.6px;height:1.6px;background:#b0b0b0;"></div>
<div class="a" style="left:447.55749999999995px;top:66.1px;width:0.7px;height:0.7px;background:#a0a0a0;"></div>
<div class="a" style="left:455.0925px;top:66.1px;width:0.7px;height:0.7px;background:#a0a0a0;"></div>
<span class="a t" style="top:65.00px;font-size:4.4px;line-height:4.4px;color:#3a3a3a;font-weight:normal;font-family:'Liberation Sans', sans-serif;transform:scaleX(1.0000);left:457.01px">13</span>
<div class="a" style="left:466.44500000000005px;top:65.6px;width:0.6px;height:1.6px;background:#b0b0b0;"></div>
<div class="a" style="left:462.6275px;top:66.1px;width:0.7px;height:0.7px;background:#a0a0a0;"></div>
<div class="a" style="left:470.1625px;top:66.1px;width:0.7px;height:0.7px;background:#a0a0a0;"></div>
<span class="a t" style="top:65.00px;font-size:4.4px;line-height:4.4px;color:#3a3a3a;font-weight:normal;font-family:'Liberation Sans', sans-serif;transform:scaleX(1.0000);left:472.08px">14</span>
<div class="a" style="left:481.51500000000004px;top:65.6px;width:0.6px;height:1.6px;background:#b0b0b0;"></div>
<div class="a" style="left:477.6975px;top:66.1px;width:0.7px;height:0.7px;background:#a0a0a0;"></div>
<div class="a" style="left:485.2325px;top:66.1px;width:0.7px;height:0.7px;background:#a0a0a0;"></div>
<span class="a t" style="top:65.00px;font-size:4.4px;line-height:4.4px;color:#3a3a3a;font-weight:normal;font-family:'Liberation Sans', sans-serif;transform:scaleX(1.0000);left:487.15px">15</span>
<div class="a" style="left:496.58500000000004px;top:65.6px;width:0.6px;height:1.6px;background:#b0b0b0;"></div>
<div class="a" style="left:492.7675px;top:66.1px;width:0.7px;height:0.7px;background:#a0a0a0;"></div>
<div class="a" style="left:500.3025px;top:66.1px;width:0.7px;height:0.7px;background:#a0a0a0;"></div>
<span class="a t" style="top:65.00px;font-size:4.4px;line-height:4.4px;color:#3a3a3a;font-weight:normal;font-family:'Liberation Sans', sans-serif;transform:scaleX(1.0000);left:502.22px">16</span>
<div class="a" style="left:511.65500000000003px;top:65.6px;width:0.6px;height:1.6px;background:#b0b0b0;"></div>
<div class="a" style="left:507.8375px;top:66.1px;width:0.7px;height:0.7px;background:#a0a0a0;"></div>
<div class="a" style="left:515.3725px;top:66.1px;width:0.7px;height:0.7px;background:#a0a0a0;"></div>
<span class="a t" style="top:65.00px;font-size:4.4px;line-height:4.4px;color:#3a3a3a;font-weight:normal;font-family:'Liberation Sans', sans-serif;transform:scaleX(1.0000);left:517.29px">17</span>
<div class="a" style="left:526.725px;top:65.6px;width:0.6px;height:1.6px;background:#b0b0b0;"></div>
<div class="a" style="left:522.9075px;top:66.1px;width:0.7px;height:0.7px;background:#a0a0a0;"></div>
<div class="a" style="left:530.4425px;top:66.1px;width:0.7px;height:0.7px;background:#a0a0a0;"></div>
<span class="a t" style="top:65.00px;font-size:4.4px;line-height:4.4px;color:#3a3a3a;font-weight:normal;font-family:'Liberation Sans', sans-serif;transform:scaleX(1.0000);left:532.36px">18</span>
<div class="a" style="left:541.795px;top:65.6px;width:0.6px;height:1.6px;background:#b0b0b0;"></div>
<div class="a" style="left:537.9775px;top:66.1px;width:0.7px;height:0.7px;background:#a0a0a0;"></div>
<div class="a" style="left:545.5124999999999px;top:66.1px;width:0.7px;height:0.7px;background:#a0a0a0;"></div>
<span class="a t" style="top:65.00px;font-size:4.4px;line-height:4.4px;color:#3a3a3a;font-weight:normal;font-family:'Liberation Sans', sans-serif;transform:scaleX(1.0000);left:547.43px">19</span>
<div class="a" style="left:556.865px;top:65.6px;width:0.6px;height:1.6px;background:#b0b0b0;"></div>
<div class="a" style="left:553.0475px;top:66.1px;width:0.7px;height:0.7px;background:#a0a0a0;"></div>
<div class="a" style="left:560.5825px;top:66.1px;width:0.7px;height:0.7px;background:#a0a0a0;"></div>
<span class="a t" style="top:65.00px;font-size:4.4px;line-height:4.4px;color:#3a3a3a;font-weight:normal;font-family:'Liberation Sans', sans-serif;transform:scaleX(1.0000);left:562.50px">20</span>
<div class="a" style="left:571.9350000000001px;top:65.6px;width:0.6px;height:1.6px;background:#b0b0b0;"></div>
<div class="a" style="left:568.1175000000001px;top:66.1px;width:0.7px;height:0.7px;background:#a0a0a0;"></div>
<div class="a" style="left:575.6525px;top:66.1px;width:0.7px;height:0.7px;background:#a0a0a0;"></div>
<span class="a t" style="top:65.00px;font-size:4.4px;line-height:4.4px;color:#3a3a3a;font-weight:normal;font-family:'Liberation Sans', sans-serif;transform:scaleX(1.0000);left:577.57px">21</span>
<div class="a" style="left:587.005px;top:65.6px;width:0.6px;height:1.6px;background:#b0b0b0;"></div>
<div class="a" style="left:583.1875px;top:66.1px;width:0.7px;height:0.7px;background:#a0a0a0;"></div>
<div class="a" style="left:590.7225px;top:66.1px;width:0.7px;height:0.7px;background:#a0a0a0;"></div>
<span class="a t" style="top:65.00px;font-size:4.4px;line-height:4.4px;color:#3a3a3a;font-weight:normal;font-family:'Liberation Sans', sans-serif;transform:scaleX(1.0000);left:592.64px">22</span>
<div class="a" style="left:602.075px;top:65.6px;width:0.6px;height:1.6px;background:#b0b0b0;"></div>
<div class="a" style="left:598.2575px;top:66.1px;width:0.7px;height:0.7px;background:#a0a0a0;"></div>
<div class="a" style="left:605.7925px;top:66.1px;width:0.7px;height:0.7px;background:#a0a0a0;"></div>
<span class="a t" style="top:65.00px;font-size:4.4px;line-height:4.4px;color:#3a3a3a;font-weight:normal;font-family:'Liberation Sans', sans-serif;transform:scaleX(1.0000);left:607.71px">23</span>
<div class="a" style="left:617.1450000000001px;top:65.6px;width:0.6px;height:1.6px;background:#b0b0b0;"></div>
<div class="a" style="left:613.3275000000001px;top:66.1px;width:0.7px;height:0.7px;background:#a0a0a0;"></div>
<div class="a" style="left:620.8625000000001px;top:66.1px;width:0.7px;height:0.7px;background:#a0a0a0;"></div>
<svg class="a" style="left:262.0px;top:64.0px;" width="3.5" height="8" viewBox="0 0 3.5 8"><path d="M0.5 0.5 H3 V1.8 L1.75 3 L0.5 1.8 Z M0.5 4.5 L1.75 3.3 L3 4.5 V5.6 H0.5 Z M0.5 6 H3 V7.4 H0.5 Z" fill="#fff" stroke="#777" stroke-width="0.45"/></svg>
<div class="a" style="left:302.5px;top:70.2px;width:0.8px;height:0.8px;background:#777;"></div>
<div class="a" style="left:340.8px;top:70.2px;width:0.8px;height:0.8px;background:#777;"></div>
<div class="a" style="left:379.0px;top:70.2px;width:0.8px;height:0.8px;background:#777;"></div>
<div class="a" style="left:417.20000000000005px;top:70.2px;width:0.8px;height:0.8px;background:#777;"></div>
<div class="a" style="left:455.40000000000003px;top:70.2px;width:0.8px;height:0.8px;background:#777;"></div>
<div class="a" style="left:493.70000000000005px;top:70.2px;width:0.8px;height:0.8px;background:#777;"></div>
<div class="a" style="left:531.9px;top:70.2px;width:0.8px;height:0.8px;background:#777;"></div>
<div class="a" style="left:570.1px;top:70.2px;width:0.8px;height:0.8px;background:#777;"></div>
<div class="a" style="left:120px;top:82.2px;width:4.8px;height:89.8px;background:#c9c9c9;border-radius:2px 2px 0 0"></div>
<div class="a" style="left:120px;top:172px;width:4.8px;height:54px;background:#ffffff;"></div>
<div class="a" style="left:120px;top:226px;width:4.8px;height:143px;background:#c9c9c9;border-radius:0 0 2px 2px"></div>
<div class="a" style="left:121.4px;top:88.81px;width:2.0px;height:0.6px;background:#909090;"></div>
<span class="a t" style="top:-1.00px;font-size:4.6px;line-height:4.6px;color:#222;font-weight:normal;font-family:'Liberation Sans', sans-serif;transform:scaleX(1.0000);left:122.10px;top:95.05px;transform:rotate(-90deg);transform-origin:50% 50%">5</span>
<div class="a" style="left:121.4px;top:103.88000000000001px;width:2.0px;height:0.6px;background:#909090;"></div>
<span class="a t" style="top:-1.00px;font-size:4.6px;line-height:4.6px;color:#222;font-weight:normal;font-family:'Liberation Sans', sans-serif;transform:scaleX(1.0000);left:122.10px;top:110.12px;transform:rotate(-90deg);transform-origin:50% 50%">4</span>
<div class="a" style="left:121.4px;top:118.95px;width:2.0px;height:0.6px;background:#909090;"></div>
<span class="a t" style="top:-1.00px;font-size:4.6px;line-height:4.6px;color:#222;font-weight:normal;font-family:'Liberation Sans', sans-serif;transform:scaleX(1.0000);left:122.10px;top:125.19px;transform:rotate(-90deg);transform-origin:50% 50%">3</span>
<div class="a" style="left:121.4px;top:134.01999999999998px;width:2.0px;height:0.6px;background:#909090;"></div>
<span class="a t" style="top:-1.00px;font-size:4.6px;line-height:4.6px;color:#222;font-weight:normal;font-family:'Liberation Sans', sans-serif;transform:scaleX(1.0000);left:122.10px;top:140.26px;transform:rotate(-90deg);transform-origin:50% 50%">2</span>
<div class="a" style="left:121.4px;top:149.09px;width:2.0px;height:0.6px;background:#909090;"></div>
<span class="a t" style="top:-1.00px;font-size:4.6px;line-height:4.6px;color:#222;font-weight:normal;font-family:'Liberation Sans', sans-serif;transform:scaleX(1.0000);left:122.10px;top:155.33px;transform:rotate(-90deg);transform-origin:50% 50%">1</span>
<div class="a" style="left:121.4px;top:164.16px;width:2.0px;height:0.6px;background:#909090;"></div>
<div class="a" style="left:121.4px;top:179.23px;width:2.0px;height:0.6px;background:#909090;"></div>
<span class="a t" style="top:-1.00px;font-size:4.6px;line-height:4.6px;color:#222;font-weight:normal;font-family:'Liberation Sans', sans-serif;transform:scaleX(1.0000);left:122.10px;top:185.47px;transform:rotate(-90deg);transform-origin:50% 50%">1</span>
<div class="a" style="left:121.4px;top:194.29999999999998px;width:2.0px;height:0.6px;background:#909090;"></div>
<span class="a t" style="top:-1.00px;font-size:4.6px;line-height:4.6px;color:#222;font-weight:normal;font-family:'Liberation Sans', sans-serif;transform:scaleX(1.0000);left:122.10px;top:200.54px;transform:rotate(-90deg);transform-origin:50% 50%">2</span>
<div class="a" style="left:121.4px;top:209.36999999999998px;width:2.0px;height:0.6px;background:#909090;"></div>
<span class="a t" style="top:-1.00px;font-size:4.6px;line-height:4.6px;color:#222;font-weight:normal;font-family:'Liberation Sans', sans-serif;transform:scaleX(1.0000);left:122.10px;top:215.61px;transform:rotate(-90deg);transform-origin:50% 50%">3</span>
<div class="a" style="left:121.4px;top:224.44px;width:2.0px;height:0.6px;background:#909090;"></div>
<span class="a t" style="top:-1.00px;font-size:4.6px;line-height:4.6px;color:#222;font-weight:normal;font-family:'Liberation Sans', sans-serif;transform:scaleX(1.0000);left:122.10px;top:230.68px;transform:rotate(-90deg);transform-origin:50% 50%">4</span>
<div class="a" style="left:121.4px;top:239.51px;width:2.0px;height:0.6px;background:#909090;"></div>
<span class="a t" style="top:-1.00px;font-size:4.6px;line-height:4.6px;color:#222;font-weight:normal;font-family:'Liberation Sans', sans-serif;transform:scaleX(1.0000);left:122.10px;top:245.75px;transform:rotate(-90deg);transform-origin:50% 50%">5</span>
<div class="a" style="left:121.4px;top:254.57999999999998px;width:2.0px;height:0.6px;background:#909090;"></div>
<span class="a t" style="top:-1.00px;font-size:4.6px;line-height:4.6px;color:#222;font-weight:normal;font-family:'Liberation Sans', sans-serif;transform:scaleX(1.0000);left:122.10px;top:260.82px;transform:rotate(-90deg);transform-origin:50% 50%">6</span>
<div class="a" style="left:121.4px;top:269.65px;width:2.0px;height:0.6px;background:#909090;"></div>
<span class="a t" style="top:-1.00px;font-size:4.6px;line-height:4.6px;color:#222;font-weight:normal;font-family:'Liberation Sans', sans-serif;transform:scaleX(1.0000);left:122.10px;top:275.89px;transform:rotate(-90deg);transform-origin:50% 50%">7</span>
<div class="a" style="left:121.4px;top:284.71999999999997px;width:2.0px;height:0.6px;background:#909090;"></div>
<span class="a t" style="top:-1.00px;font-size:4.6px;line-height:4.6px;color:#222;font-weight:normal;font-family:'Liberation Sans', sans-serif;transform:scaleX(1.0000);left:122.10px;top:290.96px;transform:rotate(-90deg);transform-origin:50% 50%">8</span>
<div class="a" style="left:121.4px;top:299.78999999999996px;width:2.0px;height:0.6px;background:#909090;"></div>
<span class="a t" style="top:-1.00px;font-size:4.6px;line-height:4.6px;color:#222;font-weight:normal;font-family:'Liberation Sans', sans-serif;transform:scaleX(1.0000);left:122.10px;top:306.03px;transform:rotate(-90deg);transform-origin:50% 50%">9</span>
<div class="a" style="left:121.4px;top:314.85999999999996px;width:2.0px;height:0.6px;background:#909090;"></div>
<span class="a t" style="top:-1.00px;font-size:4.6px;line-height:4.6px;color:#222;font-weight:normal;font-family:'Liberation Sans', sans-serif;transform:scaleX(1.0000);left:121.00px;top:321.10px;transform:rotate(-90deg);transform-origin:50% 50%">10</span>
<div class="a" style="left:121.4px;top:329.92999999999995px;width:2.0px;height:0.6px;background:#909090;"></div>
<span class="a t" style="top:-1.00px;font-size:4.6px;line-height:4.6px;color:#222;font-weight:normal;font-family:'Liberation Sans', sans-serif;transform:scaleX(1.0000);left:121.00px;top:336.17px;transform:rotate(-90deg);transform-origin:50% 50%">11</span>
<div class="a" style="left:121.4px;top:344.99999999999994px;width:2.0px;height:0.6px;background:#909090;"></div>
<span class="a t" style="top:-1.00px;font-size:4.6px;line-height:4.6px;color:#222;font-weight:normal;font-family:'Liberation Sans', sans-serif;transform:scaleX(1.0000);left:121.00px;top:351.24px;transform:rotate(-90deg);transform-origin:50% 50%">12</span>
<div class="a" style="left:121.4px;top:360.07px;width:2.0px;height:0.6px;background:#909090;"></div>
<span class="a t" style="top:-1.00px;font-size:4.6px;line-height:4.6px;color:#222;font-weight:normal;font-family:'Liberation Sans', sans-serif;transform:scaleX(1.0000);left:121.00px;top:366.31px;transform:rotate(-90deg);transform-origin:50% 50%">13</span>
<div class="a" style="left:119.5px;top:64.1px;width:5.9px;height:5.1px;background:#ffffff;"></div>
<div class="a" style="left:121.4px;top:65.3px;width:0.6px;height:2.8px;background:#6a6a6a;"></div>
<div class="a" style="left:121.4px;top:67.5px;width:2.4px;height:0.6px;background:#6a6a6a;"></div>
<div class="a" style="left:109.7px;top:63.6px;width:5.2px;height:4.8px;background:#ffffff;"></div>
<svg class="a" style="left:110.6px;top:64.4px;" width="3.4" height="3.2" viewBox="0 0 3.4 3.2"><path d="M0.3 2.4 L1.7 0.8 L3.1 2.4 Z" fill="#8a8a8a"/></svg>
<div class="a" style="left:109.7px;top:69.5px;width:5.2px;height:16.5px;background:#ffffff;"></div>
<div class="a" style="left:109.9px;top:387.7px;width:4.8px;height:5.0px;background:#ffffff;"></div>
<svg class="a" style="left:110.6px;top:388.6px;" width="3.4" height="3.2" viewBox="0 0 3.4 3.2"><path d="M0.3 0.8 L1.7 2.4 L3.1 0.8 Z" fill="#555"/></svg>
<div class="a" style="left:117px;top:374.7px;width:549px;height:0.6px;background:#d4d4d4;"></div>
<span class="a t" style="left:121.6px;top:380.00px;font-size:6.6px;line-height:6.6px;color:#5e5e5e;font-weight:normal;font-family:'Liberation Sans', sans-serif;transform:scaleX(0.8576);">Щелкните, чтобы добавить заметки</span>
<div class="a" style="left:12.2px;top:68.6px;width:90.6px;height:68.8px;background:#c65a3e;"></div>
<div class="a" style="left:13.5px;top:70.0px;width:88px;height:66.0px;background:#ffffe1;"></div>
<div class="a" style="left:13.5px;top:70.0px;width:6.2px;height:47.3px;background:#cccc9a;"></div>
<div class="a" style="left:13.5px;top:117.3px;width:6.2px;height:0.6px;background:#6a5070;"></div>
<span class="a t" style="top:70.00px;font-size:6.6px;line-height:6.6px;color:#c8472c;font-weight:normal;font-family:'Liberation Sans', sans-serif;transform:scaleX(1.0000);left:4.6px">1</span>
<div class="a" style="left:17.5px;top:84.0px;width:79.5px;height:0.5px;background:#6a4a6e;"></div>
<div class="a" style="left:80px;top:83.5px;width:17px;height:1.4px;background:#8c8498;"></div>
<span class="a t" style="left:18.8px;top:90.80px;font-size:5.6px;line-height:5.6px;color:#3a2848;font-weight:bold;font-family:'Liberation Serif', serif;transform:scaleX(0.8606);">Внешнеэкономическая</span>
<span class="a t" style="left:18.8px;top:97.60px;font-size:5.6px;line-height:5.6px;color:#3a2848;font-weight:bold;font-family:'Liberation Serif', serif;transform:scaleX(0.8583);">деятельность предприятий</span>
<div class="a" style="left:13.2px;top:143.1px;width:88.6px;height:67.0px;background:#d8d8dc;"></div>
<div class="a" style="left:13.5px;top:143.6px;width:88px;height:66.0px;background:#ffffe1;"></div>
<div class="a" style="left:13.5px;top:143.6px;width:6.2px;height:47.70000000000002px;background:#cccc9a;"></div>
<div class="a" style="left:13.5px;top:191.3px;width:6.2px;height:0.6px;background:#6a5070;"></div>
<span class="a t" style="top:144.00px;font-size:6.6px;line-height:6.6px;color:#555;font-weight:normal;font-family:'Liberation Sans', sans-serif;transform:scaleX(1.0000);left:4.6px">2</span>
<span class="a t" style="left:23.3px;top:152.00px;font-size:3.0px;line-height:3.0px;color:#1e0e26;font-weight:bold;font-family:'Liberation Serif', serif;transform:scaleX(1.0274);-webkit-text-stroke:0.2px #1e0e26">1.Сущность ВЭД и ее содержание</span>
<div class="a" style="left:17.6px;top:158.0px;width:79.4px;height:0.5px;background:#6a4a6e;"></div>
<div class="a" style="left:81.7px;top:157.5px;width:15.3px;height:1.3px;background:#8c8498;"></div>
<span class="a t" style="left:27.3px;top:159.80px;font-size:3.0px;line-height:3.0px;color:#2e2820;font-weight:normal;font-family:'Liberation Serif', serif;transform:scaleX(1.0497);-webkit-text-stroke:0.05px #2e2820"><b>ВЭД</b> - это предпринимательская деятельность в</span>
<span class="a t" style="left:27.3px;top:163.40px;font-size:3.0px;line-height:3.0px;color:#2e2820;font-weight:normal;font-family:'Liberation Serif', serif;transform:scaleX(1.0760);-webkit-text-stroke:0.05px #2e2820">области международного обмена товарами,</span>
<span class="a t" style="left:27.3px;top:167.40px;font-size:3.0px;line-height:3.0px;color:#2e2820;font-weight:normal;font-family:'Liberation Serif', serif;transform:scaleX(1.0697);-webkit-text-stroke:0.05px #2e2820">услугами, информацией, результатами</span>
<span class="a t" style="left:27.3px;top:171.40px;font-size:3.0px;line-height:3.0px;color:#2e2820;font-weight:normal;font-family:'Liberation Serif', serif;transform:scaleX(1.1009);-webkit-text-stroke:0.05px #2e2820">интеллектуальной деятельности, в том числе</span>
<span class="a t" style="left:27.3px;top:175.30px;font-size:3.0px;line-height:3.0px;color:#2e2820;font-weight:normal;font-family:'Liberation Serif', serif;transform:scaleX(1.0892);-webkit-text-stroke:0.05px #2e2820">исключительными правами на них.</span>
<span class="a t" style="left:27.3px;top:179.10px;font-size:3.0px;line-height:3.0px;color:#2e2820;font-weight:normal;font-family:'Liberation Serif', serif;transform:scaleX(1.0235);-webkit-text-stroke:0.05px #2e2820"><b>ВЭД</b> - это совокупность деятельность субъектов</span>
<span class="a t" style="left:27.3px;top:182.90px;font-size:3.0px;line-height:3.0px;color:#2e2820;font-weight:normal;font-family:'Liberation Serif', serif;transform:scaleX(1.0230);-webkit-text-stroke:0.05px #2e2820">предпринимательской деятельности, связанная с</span>
<span class="a t" style="left:27.3px;top:186.60px;font-size:3.0px;line-height:3.0px;color:#2e2820;font-weight:normal;font-family:'Liberation Serif', serif;transform:scaleX(1.0180);-webkit-text-stroke:0.05px #2e2820">их участием в международных экономических</span>
<span class="a t" style="left:27.3px;top:190.30px;font-size:3.0px;line-height:3.0px;color:#2e2820;font-weight:normal;font-family:'Liberation Serif', serif;transform:scaleX(1.5710);-webkit-text-stroke:0.05px #2e2820">отношениях.</span>
<div class="a" style="left:24.0px;top:159.8px;width:1.0px;height:1.0px;background:#8a7a9a;"></div>
<div class="a" style="left:24.0px;top:179.1px;width:1.0px;height:1.0px;background:#8a7a9a;"></div>
<div class="a" style="left:13.2px;top:217.2px;width:88.6px;height:67.0px;background:#d8d8dc;"></div>
<div class="a" style="left:13.5px;top:217.7px;width:88px;height:66.0px;background:#ffffe1;"></div>
<div class="a" style="left:13.5px;top:217.7px;width:6.2px;height:46.19999999999999px;background:#cccc9a;"></div>
<div class="a" style="left:13.5px;top:263.9px;width:6.2px;height:0.6px;background:#6a5070;"></div>
<span class="a t" style="top:218.00px;font-size:6.6px;line-height:6.6px;color:#555;font-weight:normal;font-family:'Liberation Sans', sans-serif;transform:scaleX(1.0000);left:4.6px">3</span>
<span class="a t" style="left:23.3px;top:224.50px;font-size:4.0px;line-height:4.0px;color:#1e0e26;font-weight:bold;font-family:'Liberation Serif', serif;transform:scaleX(0.9007);-webkit-text-stroke:0.25px #1e0e26">1.Сущность ВЭД и ее содержание</span>
<div class="a" style="left:17.6px;top:232.0px;width:79.4px;height:0.5px;background:#6a4a6e;"></div>
<div class="a" style="left:81.7px;top:231.5px;width:15.3px;height:1.3px;background:#8c8498;"></div>
<span class="a t" style="left:23.3px;top:233.65px;font-size:3.1px;line-height:3.1px;color:#1a1408;font-weight:normal;font-family:'Liberation Serif', serif;transform:scaleX(1.0464);-webkit-text-stroke:0.15px #1a1408"><b style="-webkit-text-stroke:0.2px #000">Предпосылки возникновения и развития ВЭД:</b></span>
<span class="a t" style="left:23.3px;top:237.05px;font-size:3.1px;line-height:3.1px;color:#1a1408;font-weight:normal;font-family:'Liberation Serif', serif;transform:scaleX(1.0869);-webkit-text-stroke:0.15px #1a1408">1. неравномерность экономического развития</span>
<span class="a t" style="left:26.5px;top:239.75px;font-size:3.1px;line-height:3.1px;color:#1a1408;font-weight:normal;font-family:'Liberation Serif', serif;transform:scaleX(0.9900);-webkit-text-stroke:0.15px #1a1408">работающих отдел. мира</span>
<span class="a t" style="left:23.3px;top:243.65px;font-size:3.1px;line-height:3.1px;color:#1a1408;font-weight:normal;font-family:'Liberation Serif', serif;transform:scaleX(1.0026);-webkit-text-stroke:0.15px #1a1408">2. неоднородность национального рынка</span>
<span class="a t" style="left:23.3px;top:247.45px;font-size:3.1px;line-height:3.1px;color:#1a1408;font-weight:normal;font-family:'Liberation Serif', serif;transform:scaleX(0.9581);-webkit-text-stroke:0.15px #1a1408">3. международное разделение труда</span>
<span class="a t" style="left:23.3px;top:251.05px;font-size:3.1px;line-height:3.1px;color:#1a1408;font-weight:normal;font-family:'Liberation Serif', serif;transform:scaleX(1.1991);-webkit-text-stroke:0.15px #1a1408">4. политические, правовые, финансовые</span>
<span class="a t" style="left:26.5px;top:254.05px;font-size:3.1px;line-height:3.1px;color:#1a1408;font-weight:normal;font-family:'Liberation Serif', serif;transform:scaleX(0.9735);-webkit-text-stroke:0.15px #1a1408">ресурсов</span>
<span class="a t" style="left:23.3px;top:257.25px;font-size:3.1px;line-height:3.1px;color:#1a1408;font-weight:normal;font-family:'Liberation Serif', serif;transform:scaleX(1.1108);-webkit-text-stroke:0.15px #1a1408">5. характер политических отношений</span>
<span class="a t" style="left:23.3px;top:260.85px;font-size:3.1px;line-height:3.1px;color:#1a1408;font-weight:normal;font-family:'Liberation Serif', serif;transform:scaleX(1.1066);-webkit-text-stroke:0.15px #1a1408">6. особенность географического положения</span>
<span class="a t" style="left:26.5px;top:263.75px;font-size:3.1px;line-height:3.1px;color:#1a1408;font-weight:normal;font-family:'Liberation Serif', serif;transform:scaleX(1.0603);-webkit-text-stroke:0.15px #1a1408">природных и климатических условий</span>
<div class="a" style="left:13.2px;top:291.2px;width:88.6px;height:67.0px;background:#d8d8dc;"></div>
<div class="a" style="left:13.5px;top:291.7px;width:88px;height:66.0px;background:#ffffe1;"></div>
<div class="a" style="left:13.5px;top:291.7px;width:6.2px;height:47.10000000000002px;background:#cccc9a;"></div>
<div class="a" style="left:13.5px;top:338.8px;width:6.2px;height:0.6px;background:#6a5070;"></div>
<span class="a t" style="top:292.00px;font-size:6.6px;line-height:6.6px;color:#555;font-weight:normal;font-family:'Liberation Sans', sans-serif;transform:scaleX(1.0000);left:4.6px">4</span>
<span class="a t" style="left:23.3px;top:298.50px;font-size:4.0px;line-height:4.0px;color:#1e0e26;font-weight:bold;font-family:'Liberation Serif', serif;transform:scaleX(0.9007);-webkit-text-stroke:0.25px #1e0e26">1.Сущность ВЭД и ее содержание</span>
<div class="a" style="left:17.6px;top:306.0px;width:79.4px;height:0.5px;background:#6a4a6e;"></div>
<div class="a" style="left:81.7px;top:305.5px;width:15.3px;height:1.3px;background:#8c8498;"></div>
<span class="a t" style="left:23.3px;top:308.30px;font-size:3.0px;line-height:3.0px;color:#3a3020;font-weight:normal;font-family:'Liberation Serif', serif;transform:scaleX(0.9864);-webkit-text-stroke:0.1px #3a3020">ВЭД реализуется посредством организации</span>
<span class="a t" style="left:26px;top:312.10px;font-size:3.0px;line-height:3.0px;color:#3a3020;font-weight:normal;font-family:'Liberation Serif', serif;transform:scaleX(1.0757);-webkit-text-stroke:0.1px #3a3020">внешнеэкономических связей.</span>
<span class="a t" style="left:26px;top:316.00px;font-size:3.0px;line-height:3.0px;color:#3a3020;font-weight:normal;font-family:'Liberation Serif', serif;transform:scaleX(1.0708);-webkit-text-stroke:0.1px #3a3020">Внешнеэкономические связи - это упорядоченные</span>
<span class="a t" style="left:26px;top:319.50px;font-size:3.0px;line-height:3.0px;color:#3a3020;font-weight:normal;font-family:'Liberation Serif', serif;transform:scaleX(1.0714);-webkit-text-stroke:0.1px #3a3020">взаимодействия субъектов внешнеэкономической</span>
<span class="a t" style="left:26px;top:322.90px;font-size:3.0px;line-height:3.0px;color:#3a3020;font-weight:normal;font-family:'Liberation Serif', serif;transform:scaleX(1.0764);-webkit-text-stroke:0.1px #3a3020">деятельности. Связи могут иметь координацию и</span>
<span class="a t" style="left:26px;top:326.50px;font-size:3.0px;line-height:3.0px;color:#3a3020;font-weight:normal;font-family:'Liberation Serif', serif;transform:scaleX(1.1434);-webkit-text-stroke:0.1px #3a3020">безвозмездный характер.</span>
<span class="a t" style="left:23.3px;top:331.00px;font-size:3.0px;line-height:3.0px;color:#3a3020;font-weight:normal;font-family:'Liberation Serif', serif;transform:scaleX(1.1044);-webkit-text-stroke:0.1px #3a3020">Внешнеэкономическая ВЭД относится</span>
<span class="a t" style="left:26px;top:334.50px;font-size:3.0px;line-height:3.0px;color:#3a3020;font-weight:normal;font-family:'Liberation Serif', serif;transform:scaleX(1.1060);-webkit-text-stroke:0.1px #3a3020">деятельность, направленная на международную</span>
<span class="a t" style="left:26px;top:338.30px;font-size:3.0px;line-height:3.0px;color:#3a3020;font-weight:normal;font-family:'Liberation Serif', serif;transform:scaleX(1.1436);-webkit-text-stroke:0.1px #3a3020">сферу экономической жизни, развивая более и</span>
<span class="a t" style="left:26px;top:342.10px;font-size:3.0px;line-height:3.0px;color:#3a3020;font-weight:normal;font-family:'Liberation Serif', serif;transform:scaleX(1.0638);-webkit-text-stroke:0.1px #3a3020">мировую экономику международного устройства</span>
<span class="a t" style="left:26px;top:345.60px;font-size:3.0px;line-height:3.0px;color:#3a3020;font-weight:normal;font-family:'Liberation Serif', serif;transform:scaleX(1.1075);-webkit-text-stroke:0.1px #3a3020">отношений и др.</span>
<div class="a" style="left:13.2px;top:365.3px;width:88.6px;height:67.0px;background:#d8d8dc;"></div>
<div class="a" style="left:13.5px;top:365.8px;width:88px;height:66.0px;background:#ffffe1;"></div>
<div class="a" style="left:13.5px;top:365.8px;width:6.2px;height:54.19999999999999px;background:#cccc9a;"></div>
<div class="a" style="left:13.5px;top:420px;width:6.2px;height:0.6px;background:#6a5070;"></div>
<span class="a t" style="top:366.00px;font-size:6.6px;line-height:6.6px;color:#555;font-weight:normal;font-family:'Liberation Sans', sans-serif;transform:scaleX(1.0000);left:4.6px">5</span>
<span class="a t" style="left:23.4px;top:371.90px;font-size:4.0px;line-height:4.0px;color:#1e0e26;font-weight:bold;font-family:'Liberation Serif', serif;transform:scaleX(0.8874);-webkit-text-stroke:0.25px #1e0e26">1.Сущность ВЭД и ее содержание</span>
<div class="a" style="left:17.6px;top:380.0px;width:79.4px;height:0.5px;background:#6a4a6e;"></div>
<div class="a" style="left:80px;top:379.5px;width:17px;height:1.3px;background:#8c8498;"></div>
<span class="a t" style="left:23.4px;top:382.50px;font-size:2.8px;line-height:2.8px;color:#2a2418;font-weight:normal;font-family:'Liberation Serif', serif;transform:scaleX(0.9540);-webkit-text-stroke:0.1px #2a2418">Основные функции ВЭД внешнеэкономические отношения</span>
<span class="a t" style="left:26px;top:384.90px;font-size:2.8px;line-height:2.8px;color:#2a2418;font-weight:normal;font-family:'Liberation Serif', serif;transform:scaleX(0.9372);-webkit-text-stroke:0.1px #2a2418">включ</span>
<span class="a t" style="left:26px;top:387.40px;font-size:2.8px;line-height:2.8px;color:#2a2418;font-weight:normal;font-family:'Liberation Serif', serif;transform:scaleX(1.0535);-webkit-text-stroke:0.1px #2a2418">• международное торговое сотрудничество торгового</span>
<span class="a t" style="left:27.5px;top:389.70px;font-size:2.8px;line-height:2.8px;color:#2a2418;font-weight:normal;font-family:'Liberation Serif', serif;transform:scaleX(1.1406);-webkit-text-stroke:0.1px #2a2418">обмена товарами в виде вещественной форме и</span>
<span class="a t" style="left:27.5px;top:392.20px;font-size:2.8px;line-height:2.8px;color:#2a2418;font-weight:normal;font-family:'Liberation Serif', serif;transform:scaleX(1.1260);-webkit-text-stroke:0.1px #2a2418">услуги, информацию и интеллектуальные права</span>
<div class="a" style="left:0px;top:393.2px;width:108.8px;height:1.0px;background:#e6e6e6;"></div>
<div class="a" style="left:0px;top:394.4px;width:666px;height:7.6px;background:#f3f3f3;"></div>
<div class="a" style="left:0px;top:394.1px;width:666px;height:0.5px;background:#dadada;"></div>
<span class="a t" style="left:3.2px;top:396.00px;font-size:5.0px;line-height:5.0px;color:#606060;font-weight:normal;font-family:'Liberation Sans', sans-serif;transform:scaleX(0.8123);">Слайд 1 из 81</span>
<span class="a t" style="left:43.2px;top:396.00px;font-size:5.0px;line-height:5.0px;color:#606060;font-weight:normal;font-family:'Liberation Sans', sans-serif;transform:scaleX(0.8578);">русский</span>
<svg class="a" style="left:65.6px;top:395.0px;" width="6" height="7" viewBox="0 0 6 7"><circle cx="3" cy="1.2" r="0.9" fill="#666"/><path d="M0.6 2.6 H5.4 M3 2.6 V4.6 L1.6 6.4 M3 4.6 L4.4 6.4" fill="none" stroke="#666" stroke-width="0.6"/><rect x="3.4" y="3.6" width="2.4" height="2.6" fill="#fff" stroke="#666" stroke-width="0.5"/></svg>
<span class="a t" style="left:72.6px;top:396.00px;font-size:5.0px;line-height:5.0px;color:#606060;font-weight:normal;font-family:'Liberation Sans', sans-serif;transform:scaleX(0.8980);">Специальные возможности: не поддерживаются</span>
<svg class="a" style="left:528.3px;top:395.4px;" width="5.6" height="4.6" viewBox="0 0 5.6 4.6"><path d="M0.5 2 H5 M0.5 3.4 H5 M2.8 0.3 L1.8 1.3 M2.8 0.3 L3.8 1.3" fill="none" stroke="#555" stroke-width="0.5"/></svg>
<span class="a t" style="left:534px;top:396.00px;font-size:5.0px;line-height:5.0px;color:#606060;font-weight:normal;font-family:'Liberation Sans', sans-serif;transform:scaleX(0.9307);">Заметки</span>
<svg class="a" style="left:559.6px;top:395.2px;" width="6" height="5.4" viewBox="0 0 6 5.4"><path d="M0.5 0.5 H5.4 V3.6 H2.4 L1.2 4.8 V3.6 H0.5 Z" fill="none" stroke="#555" stroke-width="0.5"/></svg>
<span class="a t" style="left:566px;top:396.00px;font-size:5.0px;line-height:5.0px;color:#606060;font-weight:normal;font-family:'Liberation Sans', sans-serif;transform:scaleX(0.9281);">Примечания</span>
<div class="a" style="left:600.7px;top:394.2px;width:14.7px;height:7.8px;background:#d2d2d2;"></div>
<svg class="a" style="left:605px;top:395.6px;" width="6.4" height="5.2" viewBox="0 0 6.4 5.2"><rect x="0.4" y="0.4" width="5.6" height="4.4" fill="none" stroke="#555" stroke-width="0.6"/><rect x="1.4" y="1.4" width="1.2" height="2.4" fill="#555"/></svg>
<svg class="a" style="left:620px;top:395.6px;" width="6.4" height="5.2" viewBox="0 0 6.4 5.2"><rect x="0.4" y="0.4" width="2.2" height="1.8" fill="none" stroke="#555" stroke-width="0.5"/><rect x="3.6" y="0.4" width="2.2" height="1.8" fill="none" stroke="#555" stroke-width="0.5"/><rect x="0.4" y="3" width="2.2" height="1.8" fill="none" stroke="#555" stroke-width="0.5"/><rect x="3.6" y="3" width="2.2" height="1.8" fill="none" stroke="#555" stroke-width="0.5"/></svg>
<svg class="a" style="left:635.2px;top:395.6px;" width="6.4" height="5.4" viewBox="0 0 6.4 5.4"><path d="M0.4 0.6 H2.8 V4.8 H0.4 Z M3.4 0.6 H5.8 V4.8 H3.4 Z" fill="none" stroke="#555" stroke-width="0.5"/></svg>
<svg class="a" style="left:650.6px;top:395.4px;" width="6.4" height="6" viewBox="0 0 6.4 6"><rect x="0.4" y="0.4" width="5.6" height="3.4" fill="none" stroke="#555" stroke-width="0.5"/><path d="M3.2 3.8 V5.8 M2 5.8 H4.4" stroke="#555" stroke-width="0.5"/></svg>
<div class="a" style="left:662.6px;top:398.2px;width:3.4px;height:0.6px;background:#555;"></div>
</body></html>
